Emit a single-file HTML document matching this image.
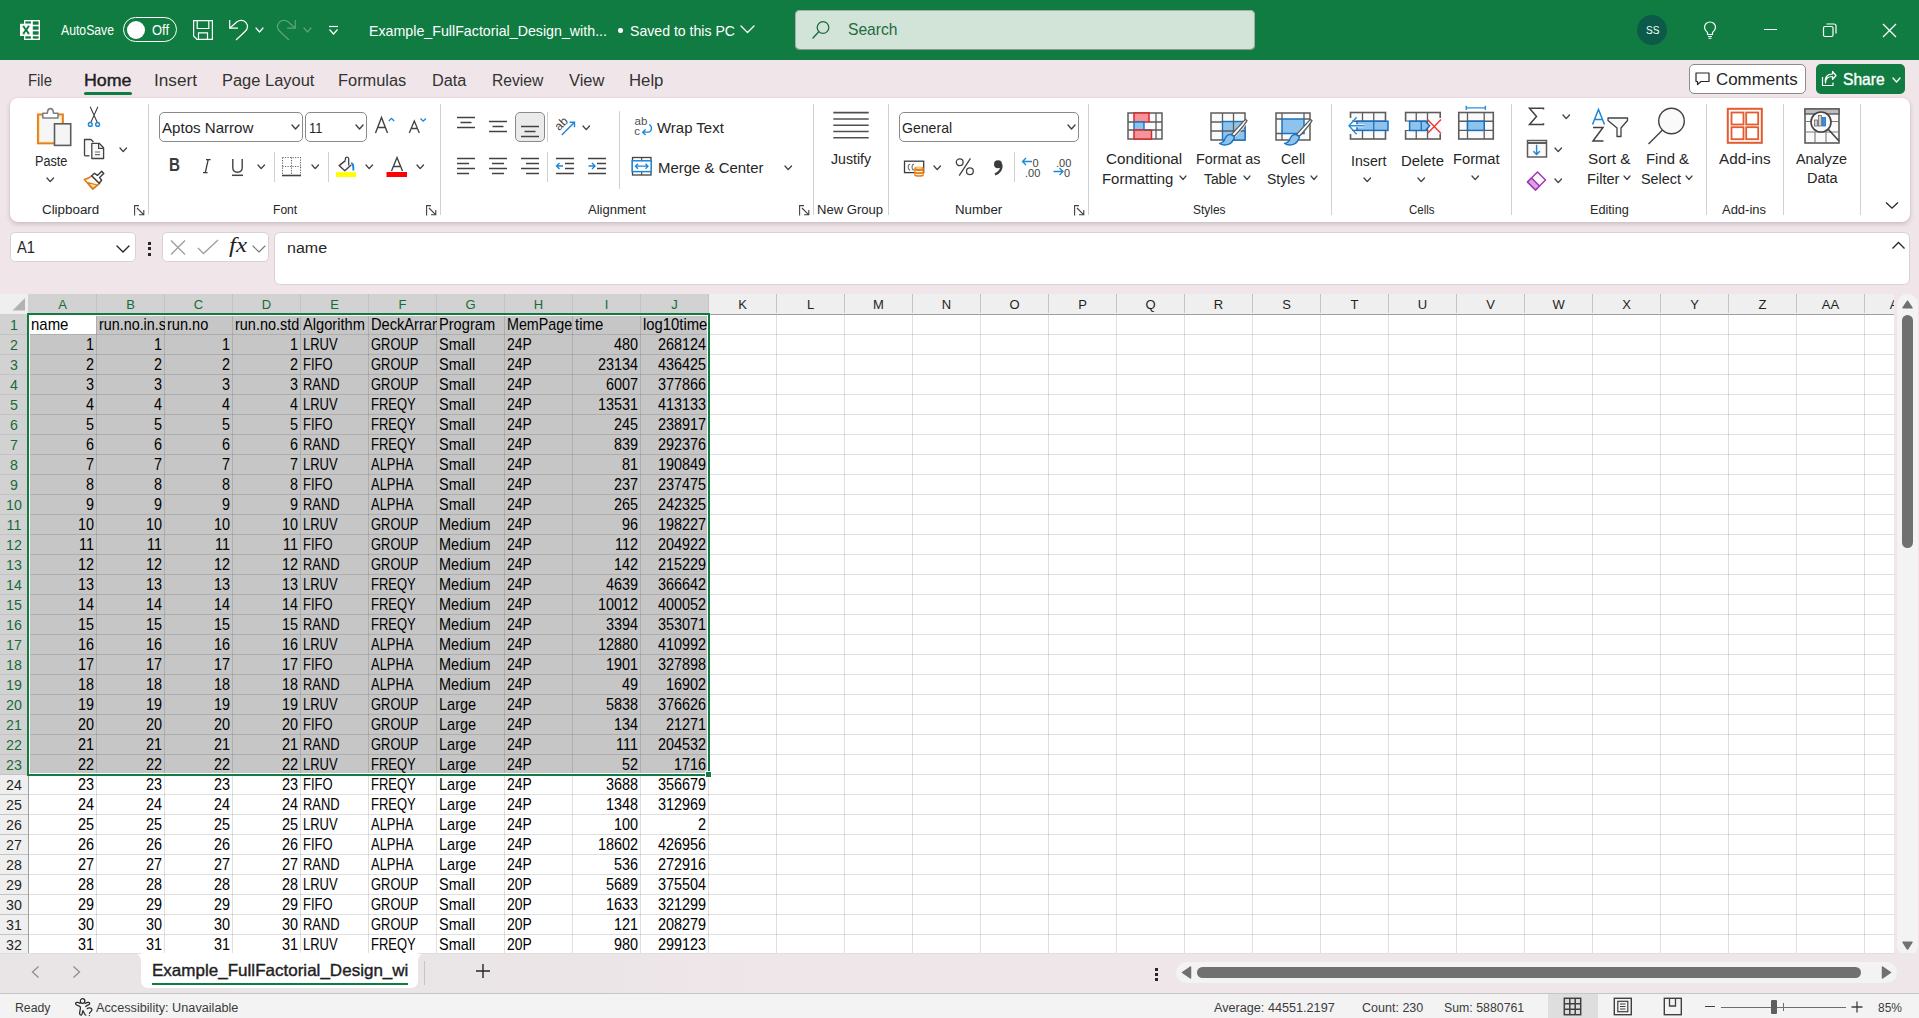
<!DOCTYPE html><html><head><meta charset="utf-8"><title>Excel</title><style>
*{margin:0;padding:0;box-sizing:border-box}
html,body{width:1919px;height:1018px;overflow:hidden}
body{position:relative;background:#f0e6e9;font-family:"Liberation Sans",sans-serif;color:#262626}
.t{position:absolute;white-space:nowrap;transform-origin:0 50%}
.i{position:absolute;overflow:visible}
.r{position:absolute}
</style></head><body><div class="r" style="left:0px;top:0px;width:1919px;height:60px;background:#107c41"></div>
<svg class="i" style="left:20px;top:20px;" width="20" height="20" viewBox="0 0 20 20"><rect x="4" y="0" width="16" height="20" rx="0.6" fill="#fff"/><g fill="#107c41"><rect x="5.3" y="1.4" width="5.6" height="2.3"/><rect x="12.8" y="1.4" width="5.8" height="3.3"/><rect x="12.8" y="6.3" width="5.8" height="3.4"/><rect x="12.8" y="11.3" width="5.8" height="3.4"/><rect x="12.8" y="16.3" width="5.8" height="2.3"/><rect x="5.3" y="16.3" width="5.6" height="2.3"/></g><rect x="0" y="3.7" width="12" height="12.4" rx="0.5" fill="#fff"/><path d="M3.3 6.3 L8.8 13.6 M8.8 6.3 L3.3 13.6" stroke="#107c41" stroke-width="1.9"/><path d="M2.6 6.2 H4.6 M7.6 6.2 H9.6 M2.6 13.8 H4.6 M7.6 13.8 H9.6" stroke="#107c41" stroke-width="0.9"/></svg>
<div class="t" style="left:61.0px;top:23.15px;font-size:14.00px;line-height:14.00px;color:#fff;transform:scaleX(0.8730);">AutoSave</div>
<div class="r" style="left:122.5px;top:17px;width:54px;height:25px;border:1px solid #fff;border-radius:13px"></div>
<div class="r" style="left:127px;top:20.5px;width:18px;height:18px;background:#fff;border-radius:50%"></div>
<div class="t" style="left:151.5px;top:23.15px;font-size:14.00px;line-height:14.00px;color:#fff;transform:scaleX(0.9231);">Off</div>
<svg class="i" style="left:193px;top:20px;" width="20" height="20" viewBox="0 0 20 20"><path d="M0.6 0.6 H19.4 V19.4 H4 L0.6 16 Z" fill="none" stroke="#fff" stroke-width="1.2" stroke-linejoin="miter"/><path d="M4.2 0.6 V8.5 H15.8 V0.6" fill="none" stroke="#fff" stroke-width="1.2"/><path d="M5.5 19.4 V12.8 H14.5 V19.4" fill="none" stroke="#fff" stroke-width="1.2"/></svg>
<svg class="i" style="left:227px;top:19px;" width="22" height="22" viewBox="0 0 22 22"><path d="M2.7 1 V9.2 H11" fill="none" stroke="#fff" stroke-width="1.2"/><path d="M3 9 L10 2.8 C12.5 0.6 16.8 0.8 19 3.6 C21.2 6.4 20.6 10 18 12.5 L9 21" fill="none" stroke="#fff" stroke-width="1.2"/></svg>
<svg class="i" style="left:255.0px;top:26.5px;" width="9" height="6" viewBox="0 0 9 6"><path d="M1 1 L4.5 5.0 L8.0 1" fill="none" stroke="#fff" stroke-width="1.2" stroke-linecap="round" stroke-linejoin="round"/></svg>
<svg class="i" style="left:276px;top:19px;" width="22" height="22" viewBox="0 0 22 22"><path d="M19.3 1 V9.2 H11" fill="none" stroke="#5aa57a" stroke-width="1.2"/><path d="M19 9 L12 2.8 C9.5 0.6 5.2 0.8 3 3.6 C0.8 6.4 1.4 10 4 12.5 L13 21" fill="none" stroke="#5aa57a" stroke-width="1.2"/></svg>
<svg class="i" style="left:303.0px;top:26.5px;" width="9" height="6" viewBox="0 0 9 6"><path d="M1 1 L4.5 5.0 L8.0 1" fill="none" stroke="#5aa57a" stroke-width="1.2" stroke-linecap="round" stroke-linejoin="round"/></svg>
<svg class="i" style="left:328px;top:25px;" width="11" height="11" viewBox="0 0 11 11"><path d="M1 1.5 H10" stroke="#fff" stroke-width="1.2"/><path d="M1.5 4.5 L5.5 9 L9.5 4.5" fill="none" stroke="#fff" stroke-width="1.2"/></svg>
<div class="t" style="left:369.0px;top:23.30px;font-size:15.00px;line-height:15.00px;color:#fff;transform:scaleX(0.9484);">Example_FullFactorial_Design_with...</div>
<div class="r" style="left:618px;top:28px;width:4.5px;height:4.5px;background:#fff;border-radius:50%"></div>
<div class="t" style="left:630.0px;top:23.30px;font-size:15.00px;line-height:15.00px;color:#fff;transform:scaleX(0.9398);">Saved to this PC</div>
<svg class="i" style="left:739.5px;top:24.8px;" width="15" height="8.5" viewBox="0 0 15 8.5"><path d="M1 1 L7.5 7.5 L14.0 1" fill="none" stroke="#fff" stroke-width="1.3" stroke-linecap="round" stroke-linejoin="round"/></svg>
<div class="r" style="left:795px;top:10px;width:460px;height:40px;background:#d2e3d8;border-radius:5px;box-shadow:inset 0 -1px 0 #8c9a91, inset 0 0 0 1px #9fb0a5"></div>
<svg class="i" style="left:811px;top:20px;" width="20" height="20" viewBox="0 0 20 20"><circle cx="12" cy="7.5" r="5.8" fill="none" stroke="#1e6b3e" stroke-width="1.3"/><path d="M7.8 11.8 L2 18" stroke="#1e6b3e" stroke-width="1.4" stroke-linecap="round"/></svg>
<div class="t" style="left:847.5px;top:20.61px;font-size:17.00px;line-height:17.00px;color:#1e6b3e;transform:scaleX(0.9189);">Search</div>
<div class="r" style="left:1637px;top:15px;width:30px;height:30px;background:#0c5a4a;border-radius:50%"></div>
<div class="t" style="left:1645.5px;top:25.11px;font-size:10.50px;line-height:10.50px;color:#fff;transform:scaleX(0.9638);">SS</div>
<svg class="i" style="left:1703px;top:21px;" width="14" height="18" viewBox="0 0 14 18"><path d="M4.5 11.5 C2.5 10 1.5 8.3 1.5 6.3 C1.5 3.2 4 1 7 1 C10 1 12.5 3.2 12.5 6.3 C12.5 8.3 11.5 10 9.5 11.5 V13.5 H4.5 Z" fill="none" stroke="#fff" stroke-width="1.2" stroke-linejoin="round"/><path d="M5 15.5 H9 M5.5 17.3 H8.5" stroke="#fff" stroke-width="1.1"/></svg>
<div class="r" style="left:1763.5px;top:28.5px;width:13px;height:1.3px;background:#fff"></div>
<svg class="i" style="left:1822px;top:22px;" width="16" height="16" viewBox="0 0 16 16"><rect x="1.5" y="4.5" width="9.5" height="10" rx="1.5" fill="none" stroke="#fff" stroke-width="1.2"/><path d="M4.5 2 H12 C13.3 2 14 2.8 14 4 V11.5" fill="none" stroke="#fff" stroke-width="1.2"/></svg>
<svg class="i" style="left:1882px;top:23px;" width="15" height="15" viewBox="0 0 15 15"><path d="M1 1 L14 14 M14 1 L1 14" stroke="#fff" stroke-width="1.3"/></svg>
<div class="t" style="left:27.5px;top:73.46px;font-size:16.00px;line-height:16.00px;color:#323232;transform:scaleX(0.9270);">File</div>
<div class="t" style="left:84.0px;top:73.46px;font-size:16.00px;line-height:16.00px;color:#1f1f1f;transform:scaleX(1.1129);-webkit-text-stroke:0.4px #1f1f1f;">Home</div>
<div class="t" style="left:154.0px;top:73.46px;font-size:16.00px;line-height:16.00px;color:#323232;transform:scaleX(1.0746);">Insert</div>
<div class="t" style="left:221.6px;top:73.46px;font-size:16.00px;line-height:16.00px;color:#323232;transform:scaleX(1.0283);">Page Layout</div>
<div class="t" style="left:338.4px;top:73.46px;font-size:16.00px;line-height:16.00px;color:#323232;transform:scaleX(1.0243);">Formulas</div>
<div class="t" style="left:431.6px;top:73.46px;font-size:16.00px;line-height:16.00px;color:#323232;transform:scaleX(1.0178);">Data</div>
<div class="t" style="left:491.7px;top:73.46px;font-size:16.00px;line-height:16.00px;color:#323232;transform:scaleX(0.9778);">Review</div>
<div class="t" style="left:568.6px;top:73.46px;font-size:16.00px;line-height:16.00px;color:#323232;transform:scaleX(1.0293);">View</div>
<div class="t" style="left:628.6px;top:73.46px;font-size:16.00px;line-height:16.00px;color:#323232;transform:scaleX(1.0454);">Help</div>
<div class="r" style="left:84px;top:92px;width:48px;height:3px;background:#107c41;border-radius:2px"></div>
<div class="r" style="left:1689px;top:64px;width:117px;height:30px;background:#fff;border:1px solid #8f8b8c;border-radius:5px"></div>
<svg class="i" style="left:1695px;top:72px;" width="15" height="13" viewBox="0 0 15 13"><path d="M1 1 H14 V9.5 H6 L2.5 12.5 V9.5 H1 Z" fill="none" stroke="#262626" stroke-width="1.2" stroke-linejoin="round"/></svg>
<div class="t" style="left:1716.0px;top:70.83px;font-size:16.50px;line-height:16.50px;color:#262626;transform:scaleX(1.0242);">Comments</div>
<div class="r" style="left:1816px;top:64px;width:89px;height:30px;background:#107c41;border-radius:5px"></div>
<svg class="i" style="left:1821px;top:70px;" width="16" height="17" viewBox="0 0 16 17"><path d="M1.5 7 V15.5 H12 V12.5" fill="none" stroke="#fff" stroke-width="1.2" stroke-linejoin="round"/><path d="M4.5 13 C4.5 8.5 7 6.5 11.5 6.5 V9.5 L15 5.5 L11.5 1.5 V4 C6.5 4 3.5 7 4.5 13 Z" fill="none" stroke="#fff" stroke-width="1.2" stroke-linejoin="round"/></svg>
<div class="t" style="left:1842.5px;top:70.83px;font-size:16.50px;line-height:16.50px;color:#fff;transform:scaleX(0.9470);-webkit-text-stroke:0.4px #fff;">Share</div>
<svg class="i" style="left:1892.0px;top:76.5px;" width="9" height="6" viewBox="0 0 9 6"><path d="M1 1 L4.5 5.0 L8.0 1" fill="none" stroke="#fff" stroke-width="1.3" stroke-linecap="round" stroke-linejoin="round"/></svg>
<div class="r" style="left:10px;top:98px;width:1900px;height:124px;background:#fff;border-radius:8px;box-shadow:0 2px 5px rgba(60,40,50,0.22), 0 0 1px rgba(0,0,0,0.12)"></div>
<div class="r" style="left:148px;top:104px;width:1px;height:111px;background:#d1d1d1"></div>
<div class="r" style="left:440px;top:104px;width:1px;height:111px;background:#d1d1d1"></div>
<div class="r" style="left:813px;top:104px;width:1px;height:111px;background:#d1d1d1"></div>
<div class="r" style="left:888px;top:104px;width:1px;height:111px;background:#d1d1d1"></div>
<div class="r" style="left:1088px;top:104px;width:1px;height:111px;background:#d1d1d1"></div>
<div class="r" style="left:1331px;top:104px;width:1px;height:111px;background:#d1d1d1"></div>
<div class="r" style="left:1511px;top:104px;width:1px;height:111px;background:#d1d1d1"></div>
<div class="r" style="left:1706px;top:104px;width:1px;height:111px;background:#d1d1d1"></div>
<div class="r" style="left:1783px;top:104px;width:1px;height:111px;background:#d1d1d1"></div>
<div class="r" style="left:1860px;top:104px;width:1px;height:111px;background:#d1d1d1"></div>
<svg class="i" style="left:36px;top:106px;" width="36" height="41" viewBox="0 0 36 41"><rect x="1.9" y="8.4" width="25" height="29" fill="#fbe3a0" stroke="#e67e22" stroke-width="1.9"/><rect x="4" y="10.5" width="20.8" height="25" fill="#f6f6f6"/><path d="M6.8 12 V7.3 H11.3 C11.5 4 13 2.6 14.4 2.6 C15.8 2.6 17.3 4 17.5 7.3 H22 V12 Z" fill="#fff" stroke="#808080" stroke-width="1.6" stroke-linejoin="round"/><rect x="18.5" y="17.8" width="16.2" height="21.6" fill="#f5f5f5" stroke="#5c5c5c" stroke-width="1.6"/></svg>
<div class="t" style="left:35.0px;top:153.55px;font-size:14.00px;line-height:14.00px;color:#262626;transform:scaleX(0.9050);">Paste</div>
<svg class="i" style="left:46.2px;top:177.2px;" width="8.5" height="5.6" viewBox="0 0 8.5 5.6"><path d="M1 1 L4.2 4.6 L7.5 1" fill="none" stroke="#424242" stroke-width="1.35" stroke-linecap="round" stroke-linejoin="round"/></svg>
<svg class="i" style="left:86px;top:106px;" width="16" height="22" viewBox="0 0 16 22"><path d="M4.2 0.8 L11.2 16.3 M11.9 0.8 L4.9 16.3" stroke="#3b3b3b" stroke-width="1.05"/><circle cx="4.3" cy="18.4" r="1.9" fill="#fff" stroke="#1c86d6" stroke-width="1.4"/><circle cx="11.6" cy="18.4" r="1.9" fill="#fff" stroke="#1c86d6" stroke-width="1.4"/></svg>
<svg class="i" style="left:83px;top:138px;" width="22" height="22" viewBox="0 0 22 22"><path d="M1.5 17.8 V1.5 H8 L10.5 4" fill="#f8f8f8" stroke="#424242" stroke-width="1.3" stroke-linejoin="round"/><path d="M1.5 17.8 H6.5" stroke="#424242" stroke-width="1.3"/><path d="M8.8 5.3 H16.2 L20.6 9.7 V20.5 H8.8 Z" fill="#f8f8f8" stroke="#424242" stroke-width="1.3" stroke-linejoin="round"/><path d="M15.6 5.5 V10.3 H20.4" fill="none" stroke="#424242" stroke-width="1.2"/><path d="M12 14 H17 M12 16.6 H17" fill="none" stroke="#6b6b6b" stroke-width="1.1"/></svg>
<svg class="i" style="left:119.2px;top:146.7px;" width="8.5" height="5.6" viewBox="0 0 8.5 5.6"><path d="M1 1 L4.2 4.6 L7.5 1" fill="none" stroke="#424242" stroke-width="1.35" stroke-linecap="round" stroke-linejoin="round"/></svg>
<svg class="i" style="left:83px;top:170px;" width="22" height="21" viewBox="0 0 22 21"><path d="M1.3 9.6 C4.5 8.8 7 7.8 8.8 5.8 L16.7 13.4 L9.8 19.3 Z" fill="#fafafa" stroke="#e07a1c" stroke-width="1.5" stroke-linejoin="round"/><path d="M4.8 12.6 L14.6 15 L9.9 18.6 Z" fill="#fbe08e" stroke="#e07a1c" stroke-width="1.2" stroke-linejoin="round"/><path d="M8.7 5.8 L11.5 3.3 L14.4 5.4 L18.7 1.3 L20.8 3.5 L16.6 7.6 L18.6 10.2 L16.2 13.3 Z" fill="#fff" stroke="#3b3b3b" stroke-width="1.4" stroke-linejoin="round"/></svg>
<div class="t" style="left:42.4px;top:204.22px;font-size:12.50px;line-height:12.50px;color:#262626;transform:scaleX(1.0690);">Clipboard</div>
<svg class="i" style="left:134px;top:205px;" width="11" height="11" viewBox="0 0 11 11"><path d="M0.6 10.4 V0.6 H5" fill="none" stroke="#424242" stroke-width="1.1"/><path d="M3 3 L9.8 9.8 M5 9.8 H9.8 V5" fill="none" stroke="#424242" stroke-width="1.1"/></svg>
<div class="r" style="left:159px;top:112px;width:144px;height:30px;border:1px solid #8a8a8a;border-radius:5px;background:#fff"></div>
<div class="t" style="left:162.4px;top:120.30px;font-size:15.00px;line-height:15.00px;color:#262626;transform:scaleX(1.0059);">Aptos Narrow</div>
<svg class="i" style="left:290.5px;top:124.0px;" width="9" height="6" viewBox="0 0 9 6"><path d="M1 1 L4.5 5.0 L8.0 1" fill="none" stroke="#424242" stroke-width="1.4" stroke-linecap="round" stroke-linejoin="round"/></svg>
<div class="r" style="left:305px;top:112px;width:62px;height:30px;border:1px solid #8a8a8a;border-radius:5px;background:#fff"></div>
<div class="t" style="left:309.0px;top:120.30px;font-size:15.00px;line-height:15.00px;color:#262626;transform:scaleX(0.8605);">11</div>
<svg class="i" style="left:355.1px;top:124.0px;" width="9" height="6" viewBox="0 0 9 6"><path d="M1 1 L4.5 5.0 L8.0 1" fill="none" stroke="#424242" stroke-width="1.4" stroke-linecap="round" stroke-linejoin="round"/></svg>
<svg class="i" style="left:374px;top:116px;" width="22" height="18" viewBox="0 0 22 18"><path d="M1.5 17 L7.5 1.5 L13.5 17 M3.8 11.5 H11.2" fill="none" stroke="#424242" stroke-width="1.4"/><path d="M14.8 5 L17.5 2.3 L20.2 5" fill="none" stroke="#1c86d6" stroke-width="1.3"/></svg>
<svg class="i" style="left:408px;top:116px;" width="20" height="18" viewBox="0 0 20 18"><path d="M1.3 17 L6.3 5 L11.3 17 M3.1 12.5 H9.5" fill="none" stroke="#424242" stroke-width="1.3"/><path d="M12.5 2.5 L15.2 5.2 L17.9 2.5" fill="none" stroke="#1c86d6" stroke-width="1.3"/></svg>
<div class="t" style="left:168.5px;top:157.19px;font-size:17.50px;line-height:17.50px;color:#3b3b3b;font-weight:700;transform:scaleX(0.8704);">B</div>
<svg class="i" style="left:200px;top:158px;" width="13" height="16" viewBox="0 0 13 16"><path d="M5.3 14.6 L8.2 1.6 M3 14.6 H7.6 M6 1.6 H10.6" fill="none" stroke="#3b3b3b" stroke-width="1.3"/></svg>
<svg class="i" style="left:230px;top:158px;" width="15" height="19" viewBox="0 0 15 19"><path d="M2.8 1 V9.5 C2.8 12.8 4.8 14.2 7.5 14.2 C10.2 14.2 12.2 12.8 12.2 9.5 V1" fill="none" stroke="#424242" stroke-width="1.4"/><path d="M2 17.3 H13" stroke="#424242" stroke-width="1.5"/></svg>
<svg class="i" style="left:257.2px;top:164.2px;" width="8.5" height="5.6" viewBox="0 0 8.5 5.6"><path d="M1 1 L4.2 4.6 L7.5 1" fill="none" stroke="#424242" stroke-width="1.35" stroke-linecap="round" stroke-linejoin="round"/></svg>
<div class="r" style="left:274px;top:152px;width:1px;height:30px;background:#d1d1d1"></div>
<svg class="i" style="left:281px;top:156px;" width="21" height="21" viewBox="0 0 21 21"><path d="M1.5 1.5 H19.5 V19.5 M1.5 1.5 V19.5 M10.5 1.5 V19.5 M1.5 10.5 H19.5" fill="none" stroke="#6b6b6b" stroke-width="1.1" stroke-dasharray="1.2 1.3"/><path d="M1 19.5 H20" stroke="#424242" stroke-width="1.6"/></svg>
<svg class="i" style="left:311.2px;top:164.2px;" width="8.5" height="5.6" viewBox="0 0 8.5 5.6"><path d="M1 1 L4.2 4.6 L7.5 1" fill="none" stroke="#424242" stroke-width="1.35" stroke-linecap="round" stroke-linejoin="round"/></svg>
<div class="r" style="left:328px;top:152px;width:1px;height:30px;background:#d1d1d1"></div>
<svg class="i" style="left:336px;top:155px;" width="21" height="23" viewBox="0 0 21 23"><path d="M9.4 5.6 L3.1 10.6 L8.8 15.7 L15.2 9.9 Z" fill="#fafafa" stroke="none"/><path d="M9.4 5.6 L3.1 10.6 L8.8 15.7 L15.2 9.9" fill="none" stroke="#424242" stroke-width="1.4" stroke-linejoin="round"/><path d="M9.4 5.6 V3.9 C9.4 1.4 12.7 1.4 12.7 3.9 V10.4" fill="none" stroke="#424242" stroke-width="1.3"/><path d="M15 8.1 C16.9 8.1 17.4 9.6 17.4 15.6" fill="none" stroke="#1c86d6" stroke-width="1.9"/><rect x="0" y="17.2" width="20" height="4.8" fill="#ffff00"/></svg>
<svg class="i" style="left:365.2px;top:164.2px;" width="8.5" height="5.6" viewBox="0 0 8.5 5.6"><path d="M1 1 L4.2 4.6 L7.5 1" fill="none" stroke="#424242" stroke-width="1.35" stroke-linecap="round" stroke-linejoin="round"/></svg>
<svg class="i" style="left:386px;top:156px;" width="22" height="22" viewBox="0 0 22 22"><path d="M5.5 15 L11 1.5 L16.5 15 M7.5 10.5 H14.5" fill="none" stroke="#424242" stroke-width="1.4"/><rect x="0.5" y="16" width="20.5" height="5" fill="#ff0000"/></svg>
<svg class="i" style="left:416.2px;top:164.2px;" width="8.5" height="5.6" viewBox="0 0 8.5 5.6"><path d="M1 1 L4.2 4.6 L7.5 1" fill="none" stroke="#424242" stroke-width="1.35" stroke-linecap="round" stroke-linejoin="round"/></svg>
<div class="t" style="left:272.6px;top:204.22px;font-size:12.50px;line-height:12.50px;color:#262626;transform:scaleX(0.9675);">Font</div>
<svg class="i" style="left:426px;top:205px;" width="11" height="11" viewBox="0 0 11 11"><path d="M0.6 10.4 V0.6 H5" fill="none" stroke="#424242" stroke-width="1.1"/><path d="M3 3 L9.8 9.8 M5 9.8 H9.8 V5" fill="none" stroke="#424242" stroke-width="1.1"/></svg>
<svg class="i" style="left:455px;top:114px;" width="22" height="18" viewBox="0 0 22 18"><path d="M2.0 3.5 H20.0" stroke="#424242" stroke-width="1.5"/><path d="M5.5 8.5 H16.5" stroke="#424242" stroke-width="1.5"/><path d="M2.0 13.5 H20.0" stroke="#424242" stroke-width="1.5"/></svg>
<svg class="i" style="left:487px;top:118px;" width="22" height="18" viewBox="0 0 22 18"><path d="M2.0 3.5 H20.0" stroke="#424242" stroke-width="1.5"/><path d="M5.5 8.5 H16.5" stroke="#424242" stroke-width="1.5"/><path d="M2.0 13.5 H20.0" stroke="#424242" stroke-width="1.5"/></svg>
<div class="r" style="left:515px;top:112px;width:30px;height:30px;background:#ebebeb;border:1px solid #8a8a8a;border-radius:5px"></div>
<svg class="i" style="left:519px;top:123px;" width="22" height="18" viewBox="0 0 22 18"><path d="M2.0 3.5 H20.0" stroke="#424242" stroke-width="1.5"/><path d="M5.5 8.5 H16.5" stroke="#424242" stroke-width="1.5"/><path d="M2.0 13.5 H20.0" stroke="#424242" stroke-width="1.5"/></svg>
<div class="r" style="left:547px;top:112px;width:1px;height:30px;background:#d1d1d1"></div>
<svg class="i" style="left:552px;top:114px;" width="26" height="24" viewBox="0 0 26 24"><text x="0" y="0" transform="translate(7.3 17.3) rotate(-45)" font-family="Liberation Sans" font-size="12" fill="#3b3b3b">ab</text><path d="M9.8 21 L22.5 8.3 M17.6 8.3 H22.5 V13.2" fill="none" stroke="#1c86d6" stroke-width="1.4"/></svg>
<svg class="i" style="left:582.2px;top:124.7px;" width="8.5" height="5.6" viewBox="0 0 8.5 5.6"><path d="M1 1 L4.2 4.6 L7.5 1" fill="none" stroke="#424242" stroke-width="1.35" stroke-linecap="round" stroke-linejoin="round"/></svg>
<svg class="i" style="left:455px;top:155px;" width="22" height="22" viewBox="0 0 22 22"><path d="M2.0 3.5 H20.0" stroke="#424242" stroke-width="1.5"/><path d="M2.0 8.5 H14.0" stroke="#424242" stroke-width="1.5"/><path d="M2.0 13.5 H20.0" stroke="#424242" stroke-width="1.5"/><path d="M2.0 18.5 H14.0" stroke="#424242" stroke-width="1.5"/></svg>
<svg class="i" style="left:487px;top:155px;" width="22" height="22" viewBox="0 0 22 22"><path d="M2.0 3.5 H20.0" stroke="#424242" stroke-width="1.5"/><path d="M5.0 8.5 H17.0" stroke="#424242" stroke-width="1.5"/><path d="M2.0 13.5 H20.0" stroke="#424242" stroke-width="1.5"/><path d="M5.0 18.5 H17.0" stroke="#424242" stroke-width="1.5"/></svg>
<svg class="i" style="left:519px;top:155px;" width="22" height="22" viewBox="0 0 22 22"><path d="M2.0 3.5 H20.0" stroke="#424242" stroke-width="1.5"/><path d="M7.0 8.5 H20.0" stroke="#424242" stroke-width="1.5"/><path d="M2.0 13.5 H20.0" stroke="#424242" stroke-width="1.5"/><path d="M7.0 18.5 H20.0" stroke="#424242" stroke-width="1.5"/></svg>
<div class="r" style="left:547px;top:152px;width:1px;height:30px;background:#d1d1d1"></div>
<svg class="i" style="left:554px;top:155px;" width="22" height="22" viewBox="0 0 22 22"><path d="M2.0 3.5 H20.0" stroke="#424242" stroke-width="1.5"/><path d="M11.0 8.5 H20.0" stroke="#424242" stroke-width="1.5"/><path d="M11.0 13.5 H20.0" stroke="#424242" stroke-width="1.5"/><path d="M2.0 18.5 H20.0" stroke="#424242" stroke-width="1.5"/><path d="M2.5 11 H9 M5.5 8 L2.5 11 L5.5 14" fill="none" stroke="#1c86d6" stroke-width="1.4"/></svg>
<svg class="i" style="left:586px;top:155px;" width="22" height="22" viewBox="0 0 22 22"><path d="M2.0 3.5 H20.0" stroke="#424242" stroke-width="1.5"/><path d="M11.0 8.5 H20.0" stroke="#424242" stroke-width="1.5"/><path d="M11.0 13.5 H20.0" stroke="#424242" stroke-width="1.5"/><path d="M2.0 18.5 H20.0" stroke="#424242" stroke-width="1.5"/><path d="M2.5 11 H9 M6 8 L9 11 L6 14" fill="none" stroke="#1c86d6" stroke-width="1.4"/></svg>
<div class="r" style="left:619px;top:111px;width:1px;height:78px;background:#d1d1d1"></div>
<svg class="i" style="left:633px;top:115px;" width="21" height="23" viewBox="0 0 21 23"><text x="1.6" y="10.2" font-family="Liberation Sans" font-size="11.5" fill="#505050">ab</text><text x="1.2" y="19.6" font-family="Liberation Sans" font-size="11.5" fill="#505050">c</text><path d="M16.2 9.5 C19.2 11 19.6 16.8 15 17.2 H9.8 M12.6 14.4 L9.6 17.2 L12.6 20" fill="none" stroke="#1c86d6" stroke-width="1.3"/></svg>
<div class="t" style="left:657.0px;top:120.30px;font-size:15.00px;line-height:15.00px;color:#262626;transform:scaleX(0.9974);">Wrap Text</div>
<svg class="i" style="left:631px;top:156px;" width="22" height="21" viewBox="0 0 22 21"><rect x="1.5" y="1.5" width="18.5" height="17.5" fill="#fff" stroke="#424242" stroke-width="1.3"/><path d="M10.7 1.5 V5 M10.7 15.5 V19" stroke="#424242" stroke-width="1.1"/><rect x="1.2" y="4.8" width="19" height="10.8" fill="#fff" stroke="#1c86d6" stroke-width="1.5"/><path d="M4.5 10.2 H17 M7 7.7 L4.5 10.2 L7 12.7 M14.5 7.7 L17 10.2 L14.5 12.7" fill="none" stroke="#1c86d6" stroke-width="1.3"/></svg>
<div class="t" style="left:657.5px;top:160.30px;font-size:15.00px;line-height:15.00px;color:#262626;transform:scaleX(0.9964);">Merge &amp; Center</div>
<svg class="i" style="left:784.2px;top:164.7px;" width="8.5" height="5.6" viewBox="0 0 8.5 5.6"><path d="M1 1 L4.2 4.6 L7.5 1" fill="none" stroke="#424242" stroke-width="1.35" stroke-linecap="round" stroke-linejoin="round"/></svg>
<div class="t" style="left:588.0px;top:204.22px;font-size:12.50px;line-height:12.50px;color:#262626;transform:scaleX(1.0398);">Alignment</div>
<svg class="i" style="left:799px;top:205px;" width="11" height="11" viewBox="0 0 11 11"><path d="M0.6 10.4 V0.6 H5" fill="none" stroke="#424242" stroke-width="1.1"/><path d="M3 3 L9.8 9.8 M5 9.8 H9.8 V5" fill="none" stroke="#424242" stroke-width="1.1"/></svg>
<svg class="i" style="left:832px;top:110px;" width="38" height="30" viewBox="0 0 38 30"><path d="M1.3 2.6 H36.7" stroke="#505050" stroke-width="1.6"/><path d="M1.3 9.0 H36.7" stroke="#505050" stroke-width="1.6"/><path d="M1.3 15.2 H36.7" stroke="#505050" stroke-width="1.6"/><path d="M1.3 21.5 H36.7" stroke="#505050" stroke-width="1.6"/><path d="M1.3 27.8 H36.7" stroke="#505050" stroke-width="1.6"/></svg>
<div class="t" style="left:831.0px;top:152.15px;font-size:14.00px;line-height:14.00px;color:#262626;transform:scaleX(1.0082);">Justify</div>
<div class="t" style="left:817.4px;top:204.22px;font-size:12.50px;line-height:12.50px;color:#262626;transform:scaleX(1.0439);">New Group</div>
<div class="r" style="left:899px;top:112px;width:180px;height:30px;border:1px solid #8a8a8a;border-radius:5px;background:#fff"></div>
<div class="t" style="left:902.3px;top:120.30px;font-size:15.00px;line-height:15.00px;color:#262626;transform:scaleX(0.9388);">General</div>
<svg class="i" style="left:1066.5px;top:124.0px;" width="9" height="6" viewBox="0 0 9 6"><path d="M1 1 L4.5 5.0 L8.0 1" fill="none" stroke="#424242" stroke-width="1.4" stroke-linecap="round" stroke-linejoin="round"/></svg>
<svg class="i" style="left:903px;top:159px;" width="24" height="20" viewBox="0 0 24 20"><rect x="1.5" y="2.2" width="19.2" height="11.4" fill="#fff" stroke="#3b3b3b" stroke-width="1.3"/><path d="M7.2 5.2 C4.6 5.2 4.6 11 7.2 11 M11 5.2 C8.4 5.2 8.4 11 11 11" fill="none" stroke="#6b6b6b" stroke-width="1.1"/><path d="M11.2 9 C11.2 7.2 20.8 7.2 20.8 9 V16.2 C20.8 18.2 11.2 18.2 11.2 16.2 Z" fill="#e8801e"/><ellipse cx="16" cy="9" rx="3.4" ry="0.9" fill="#fbd26a"/><path d="M12.4 12 C13 13 19 13 19.6 12 M12.4 15 C13 16 19 16 19.6 15" fill="none" stroke="#fff" stroke-width="1.1"/></svg>
<svg class="i" style="left:933.2px;top:164.7px;" width="8.5" height="5.6" viewBox="0 0 8.5 5.6"><path d="M1 1 L4.2 4.6 L7.5 1" fill="none" stroke="#424242" stroke-width="1.35" stroke-linecap="round" stroke-linejoin="round"/></svg>
<svg class="i" style="left:955px;top:157px;" width="21" height="21" viewBox="0 0 21 21"><circle cx="4.7" cy="5.3" r="3.4" fill="none" stroke="#424242" stroke-width="1.3"/><circle cx="14.9" cy="14.3" r="3.4" fill="none" stroke="#424242" stroke-width="1.3"/><path d="M15.5 1.3 L4.2 18.6" stroke="#424242" stroke-width="1.3"/></svg>
<svg class="i" style="left:992px;top:159px;" width="12" height="18" viewBox="0 0 12 18"><circle cx="6" cy="5.3" r="4" fill="#3b3b3b"/><path d="M9.5 5.5 C10 10 7.5 13.5 3 15.5" fill="none" stroke="#3b3b3b" stroke-width="2.2"/></svg>
<div class="r" style="left:1014px;top:152px;width:1px;height:30px;background:#d1d1d1"></div>
<svg class="i" style="left:1021px;top:156px;" width="22" height="22" viewBox="0 0 22 22"><path d="M1.5 5.5 H11 M5 2 L1.5 5.5 L5 9" fill="none" stroke="#1c86d6" stroke-width="1.3"/><text x="11.5" y="10.5" font-family="Liberation Sans" font-size="11" fill="#424242">0</text><text x="4" y="20.5" font-family="Liberation Sans" font-size="11" fill="#424242">.00</text></svg>
<svg class="i" style="left:1052px;top:156px;" width="22" height="22" viewBox="0 0 22 22"><text x="4" y="10.5" font-family="Liberation Sans" font-size="11" fill="#424242">.00</text><text x="12" y="20.5" font-family="Liberation Sans" font-size="11" fill="#424242">0</text><path d="M1.5 15.5 H11 M7.5 12 L11 15.5 L7.5 19" fill="none" stroke="#1c86d6" stroke-width="1.3"/></svg>
<div class="t" style="left:954.7px;top:204.22px;font-size:12.50px;line-height:12.50px;color:#262626;transform:scaleX(1.0616);">Number</div>
<svg class="i" style="left:1074px;top:205px;" width="11" height="11" viewBox="0 0 11 11"><path d="M0.6 10.4 V0.6 H5" fill="none" stroke="#424242" stroke-width="1.1"/><path d="M3 3 L9.8 9.8 M5 9.8 H9.8 V5" fill="none" stroke="#424242" stroke-width="1.1"/></svg>
<svg class="i" style="left:1127px;top:112px;" width="36" height="28" viewBox="0 0 36 28"><rect x="1" y="1" width="34" height="26" fill="#fafafa" stroke="#5c5c5c" stroke-width="1.5"/><rect x="7" y="1" width="15" height="9" fill="#f3939b" stroke="#d42a2a" stroke-width="1.5"/><rect x="7" y="10" width="10" height="8" fill="#8ec4ec" stroke="#1a73c4" stroke-width="1.4"/><rect x="7" y="18" width="17.5" height="9" fill="#f3939b" stroke="#d42a2a" stroke-width="1.5"/><path d="M1 10 H7 M22 10 H35 M1 18 H7 M17 18 H35 M29 1 V27" stroke="#5c5c5c" stroke-width="1.3"/></svg>
<div class="t" style="left:1106.3px;top:152.15px;font-size:14.00px;line-height:14.00px;color:#262626;transform:scaleX(1.0878);">Conditional</div>
<div class="t" style="left:1101.7px;top:171.65px;font-size:14.00px;line-height:14.00px;color:#262626;transform:scaleX(1.0656);">Formatting</div>
<svg class="i" style="left:1178.5px;top:175.2px;" width="8" height="5.5" viewBox="0 0 8 5.5"><path d="M1 1 L4.0 4.5 L7.0 1" fill="none" stroke="#424242" stroke-width="1.2" stroke-linecap="round" stroke-linejoin="round"/></svg>
<svg class="i" style="left:1210px;top:112px;" width="40" height="36" viewBox="0 0 40 36"><rect x="1" y="1" width="34" height="27" fill="#fafafa" stroke="#5c5c5c" stroke-width="1.5"/><rect x="12.5" y="9.5" width="22.5" height="18.5" fill="#8ec4ec" stroke="#1a73c4" stroke-width="1.4"/><path d="M1 10 H12.5 M1 19 H12.5 M12.5 1 V10 M23.5 1 V10 M12.5 19 H35 M23.5 10 V28" stroke="#5c5c5c" stroke-width="1.3"/><path d="M36.5 9 C34 12 27 21 22.5 24.5" fill="none" stroke="#fff" stroke-width="4"/><path d="M37 8.5 C36 11 29 19.5 24.5 24 L21.5 22.5 C26 18 33 9.5 35.5 7.5 Z" fill="#fff" stroke="#5c5c5c" stroke-width="1.3" stroke-linejoin="round"/><path d="M21 22.5 C17.5 22 15.5 25 14.5 28 C13.5 30.5 10 31.5 9.5 31.5 C13.5 34 22 34 24.5 25 Z" fill="#8ec4ec" stroke="#1a73c4" stroke-width="1.4" stroke-linejoin="round"/></svg>
<div class="t" style="left:1195.5px;top:152.15px;font-size:14.00px;line-height:14.00px;color:#262626;transform:scaleX(1.0236);">Format as</div>
<div class="t" style="left:1204.0px;top:171.65px;font-size:14.00px;line-height:14.00px;color:#262626;transform:scaleX(0.9860);">Table</div>
<svg class="i" style="left:1242.5px;top:175.2px;" width="8" height="5.5" viewBox="0 0 8 5.5"><path d="M1 1 L4.0 4.5 L7.0 1" fill="none" stroke="#424242" stroke-width="1.2" stroke-linecap="round" stroke-linejoin="round"/></svg>
<svg class="i" style="left:1275px;top:112px;" width="40" height="36" viewBox="0 0 40 36"><rect x="1" y="1" width="34" height="27" fill="#fafafa" stroke="#5c5c5c" stroke-width="1.5"/><rect x="7" y="7" width="22" height="14.5" fill="#8ec4ec" stroke="#1a73c4" stroke-width="1.5"/><path d="M1 7 H7 M29 7 H35 M1 21.5 H7 M7 1 V7 M29 1 V7 M7 21.5 V28" stroke="#5c5c5c" stroke-width="1.3"/><path d="M37 8.5 C36 11 29 19.5 24.5 24 L21.5 22.5 C26 18 33 9.5 35.5 7.5 Z" fill="#fff" stroke="#5c5c5c" stroke-width="1.3" stroke-linejoin="round"/><path d="M21 22.5 C17.5 22 15.5 25 14.5 28 C13.5 30.5 10 31.5 9.5 31.5 C13.5 34 22 34 24.5 25 Z" fill="#8ec4ec" stroke="#1a73c4" stroke-width="1.4" stroke-linejoin="round"/></svg>
<div class="t" style="left:1280.9px;top:152.15px;font-size:14.00px;line-height:14.00px;color:#262626;transform:scaleX(0.9992);">Cell</div>
<div class="t" style="left:1267.0px;top:171.65px;font-size:14.00px;line-height:14.00px;color:#262626;transform:scaleX(0.9967);">Styles</div>
<svg class="i" style="left:1310.0px;top:175.2px;" width="8" height="5.5" viewBox="0 0 8 5.5"><path d="M1 1 L4.0 4.5 L7.0 1" fill="none" stroke="#424242" stroke-width="1.2" stroke-linecap="round" stroke-linejoin="round"/></svg>
<div class="t" style="left:1193.0px;top:204.22px;font-size:12.50px;line-height:12.50px;color:#262626;transform:scaleX(0.9548);">Styles</div>
<svg class="i" style="left:1348px;top:111px;" width="42" height="30" viewBox="0 0 42 30"><rect x="2.5" y="1.5" width="35" height="26.5" fill="#fafafa" stroke="#5c5c5c" stroke-width="1.6"/><path d="M14.5 1.5 V28 M25.75 1.5 V28 M2.5 10.25 H37.5 M2.5 19.4 H37.5" stroke="#5c5c5c" stroke-width="1.3"/><rect x="0" y="7" width="4" height="16" fill="#fff"/><rect x="9" y="10.25" width="31" height="9.15" fill="#8ec4ec" stroke="#1a6fc0" stroke-width="1.5"/><path d="M25.75 10.25 V19.4" stroke="#1a6fc0" stroke-width="1.3"/><path d="M16 14.8 H3" stroke="#fff" stroke-width="3"/><path d="M16 14.8 H1.5 M8.6 6.3 L1 14.8 L8.6 23.3" fill="none" stroke="#2a8fe0" stroke-width="1.4"/></svg>
<div class="t" style="left:1350.6px;top:154.15px;font-size:14.00px;line-height:14.00px;color:#262626;transform:scaleX(1.0110);">Insert</div>
<svg class="i" style="left:1363.2px;top:176.7px;" width="8.5" height="5.6" viewBox="0 0 8.5 5.6"><path d="M1 1 L4.2 4.6 L7.5 1" fill="none" stroke="#424242" stroke-width="1.35" stroke-linecap="round" stroke-linejoin="round"/></svg>
<svg class="i" style="left:1404px;top:111px;" width="40" height="30" viewBox="0 0 40 30"><rect x="1.6" y="1.5" width="34.6" height="26.5" fill="#fafafa" stroke="#5c5c5c" stroke-width="1.6"/><path d="M12.25 1.5 V28 M23.5 1.5 V28 M1.6 10.25 H36.2 M1.6 19.4 H36.2" stroke="#5c5c5c" stroke-width="1.3"/><rect x="0" y="10.6" width="5" height="8.4" fill="#fff"/><rect x="24.5" y="7" width="13" height="16" fill="#fafafa"/><path d="M5.6 10.25 H21.5 L25.6 14.8 L21.5 19.4 H5.6 Z" fill="#8ec4ec" stroke="#1a6fc0" stroke-width="1.5" stroke-linejoin="miter"/><path d="M17.25 10.25 V19.4" stroke="#1a6fc0" stroke-width="1.3"/><path d="M23.5 8.5 L37 22.5 M37 8.5 L23.5 22.5" stroke="#e83a3a" stroke-width="1.4"/></svg>
<div class="t" style="left:1400.8px;top:154.15px;font-size:14.00px;line-height:14.00px;color:#262626;transform:scaleX(1.0625);">Delete</div>
<svg class="i" style="left:1417.2px;top:176.7px;" width="8.5" height="5.6" viewBox="0 0 8.5 5.6"><path d="M1 1 L4.2 4.6 L7.5 1" fill="none" stroke="#424242" stroke-width="1.35" stroke-linecap="round" stroke-linejoin="round"/></svg>
<svg class="i" style="left:1458px;top:105px;" width="38" height="36" viewBox="0 0 38 36"><path d="M8.25 2.9 H27.4 M8.25 0.8 V5 M27.4 0.8 V5" stroke="#2a8fe0" stroke-width="1.4"/><rect x="0.75" y="7.5" width="34.55" height="26.5" fill="#fafafa" stroke="#5c5c5c" stroke-width="1.6"/><path d="M9.5 7.5 V34 M26.2 7.5 V34 M0.75 16.25 H35.3 M0.75 25.4 H35.3" stroke="#5c5c5c" stroke-width="1.3"/><rect x="9.5" y="16.25" width="16.7" height="9.15" fill="#8ec4ec" stroke="#1a6fc0" stroke-width="1.5"/></svg>
<div class="t" style="left:1452.6px;top:151.85px;font-size:14.00px;line-height:14.00px;color:#262626;transform:scaleX(1.0510);">Format</div>
<svg class="i" style="left:1471.2px;top:174.7px;" width="8.5" height="5.6" viewBox="0 0 8.5 5.6"><path d="M1 1 L4.2 4.6 L7.5 1" fill="none" stroke="#424242" stroke-width="1.35" stroke-linecap="round" stroke-linejoin="round"/></svg>
<div class="t" style="left:1408.8px;top:204.22px;font-size:12.50px;line-height:12.50px;color:#262626;transform:scaleX(0.9214);">Cells</div>
<svg class="i" style="left:1528px;top:107px;" width="18" height="20" viewBox="0 0 18 20"><path d="M15.5 2.5 V1.3 H1.5 L8.5 9.5 L1.5 17.5 H15.5 V16.3" fill="none" stroke="#424242" stroke-width="1.5" stroke-linejoin="miter"/></svg>
<svg class="i" style="left:1562.2px;top:114.2px;" width="8.5" height="5.6" viewBox="0 0 8.5 5.6"><path d="M1 1 L4.2 4.6 L7.5 1" fill="none" stroke="#424242" stroke-width="1.35" stroke-linecap="round" stroke-linejoin="round"/></svg>
<svg class="i" style="left:1526px;top:139px;" width="22" height="20" viewBox="0 0 22 20"><rect x="1.5" y="1.5" width="19" height="16.5" fill="#fafafa" stroke="#5c5c5c" stroke-width="1.5"/><path d="M1.5 4 H20.5" stroke="#5c5c5c" stroke-width="2"/><path d="M10.6 5.8 V15.3 M7.4 12.2 L10.6 15.4 L13.8 12.2" fill="none" stroke="#1c86d6" stroke-width="1.4"/></svg>
<svg class="i" style="left:1554.2px;top:146.7px;" width="8.5" height="5.6" viewBox="0 0 8.5 5.6"><path d="M1 1 L4.2 4.6 L7.5 1" fill="none" stroke="#424242" stroke-width="1.35" stroke-linecap="round" stroke-linejoin="round"/></svg>
<svg class="i" style="left:1526px;top:170px;" width="22" height="22" viewBox="0 0 22 22"><path d="M1.5 12 L11.5 2 L19.5 10 L9.5 20 Z" fill="#fafafa" stroke="#a235b5" stroke-width="1.5" stroke-linejoin="round"/><path d="M1.5 12 L5.5 8 L13.5 16 L9.5 20 Z" fill="#d9a2e0" stroke="#a235b5" stroke-width="1.5" stroke-linejoin="round"/></svg>
<svg class="i" style="left:1554.2px;top:178.2px;" width="8.5" height="5.6" viewBox="0 0 8.5 5.6"><path d="M1 1 L4.2 4.6 L7.5 1" fill="none" stroke="#424242" stroke-width="1.35" stroke-linecap="round" stroke-linejoin="round"/></svg>
<svg class="i" style="left:1590px;top:108px;" width="40" height="36" viewBox="0 0 40 36"><path d="M2.5 16.5 L8.5 1.5 L14.5 16.5 M4.5 11.5 H12.5" fill="none" stroke="#1c86d6" stroke-width="1.5"/><path d="M3 19.5 H13 L3 33 H13.5" fill="none" stroke="#424242" stroke-width="1.5"/><path d="M18 10 H37.5 V12.5 L31 20 V28.5 H27 V20 L18 12.5 Z" fill="#fafafa" stroke="#424242" stroke-width="1.3" stroke-linejoin="round"/></svg>
<div class="t" style="left:1588.4px;top:151.75px;font-size:14.00px;line-height:14.00px;color:#262626;transform:scaleX(1.0898);">Sort &amp;</div>
<div class="t" style="left:1586.6px;top:171.85px;font-size:14.00px;line-height:14.00px;color:#262626;transform:scaleX(1.0414);">Filter</div>
<svg class="i" style="left:1623.0px;top:175.2px;" width="8" height="5.5" viewBox="0 0 8 5.5"><path d="M1 1 L4.0 4.5 L7.0 1" fill="none" stroke="#424242" stroke-width="1.2" stroke-linecap="round" stroke-linejoin="round"/></svg>
<svg class="i" style="left:1647px;top:107px;" width="40" height="39" viewBox="0 0 40 39"><circle cx="24.5" cy="14" r="12.8" fill="#fafafa" stroke="#424242" stroke-width="1.4"/><path d="M15.5 23 L1.5 37" stroke="#424242" stroke-width="1.5"/></svg>
<div class="t" style="left:1645.5px;top:151.75px;font-size:14.00px;line-height:14.00px;color:#262626;transform:scaleX(1.0627);">Find &amp;</div>
<div class="t" style="left:1640.6px;top:171.85px;font-size:14.00px;line-height:14.00px;color:#262626;transform:scaleX(1.0254);">Select</div>
<svg class="i" style="left:1684.5px;top:175.2px;" width="8" height="5.5" viewBox="0 0 8 5.5"><path d="M1 1 L4.0 4.5 L7.0 1" fill="none" stroke="#424242" stroke-width="1.2" stroke-linecap="round" stroke-linejoin="round"/></svg>
<div class="t" style="left:1589.6px;top:204.22px;font-size:12.50px;line-height:12.50px;color:#262626;transform:scaleX(1.0151);">Editing</div>
<svg class="i" style="left:1726px;top:107px;" width="38" height="38" viewBox="0 0 38 38"><rect x="1.8" y="1.8" width="34" height="34" fill="#fff" stroke="#e55b2d" stroke-width="2"/><rect x="5.5" y="5.5" width="12" height="12" fill="#fff" stroke="#e55b2d" stroke-width="1.8"/><rect x="20.2" y="5.5" width="12" height="12" fill="#fff" stroke="#e55b2d" stroke-width="1.8"/><rect x="5.5" y="20.2" width="12" height="12" fill="#fff" stroke="#e55b2d" stroke-width="1.8"/><rect x="20.2" y="20.2" width="12" height="12" fill="#fff" stroke="#e55b2d" stroke-width="1.8"/></svg>
<div class="t" style="left:1719.2px;top:152.15px;font-size:14.00px;line-height:14.00px;color:#262626;transform:scaleX(1.0891);">Add-ins</div>
<div class="t" style="left:1722.4px;top:204.42px;font-size:12.50px;line-height:12.50px;color:#262626;transform:scaleX(1.0381);">Add-ins</div>
<svg class="i" style="left:1803px;top:107px;" width="40" height="39" viewBox="0 0 40 39"><rect x="2" y="2" width="34" height="34" fill="#fafafa" stroke="#5c5c5c" stroke-width="1.6"/><rect x="2" y="2" width="34" height="5" fill="#bdbdbd" stroke="#5c5c5c" stroke-width="1.4"/><path d="M2 14.5 H36 M2 25 H36 M12 25 V36 M23 25 V36" stroke="#7a7a7a" stroke-width="1.1"/><circle cx="18" cy="15" r="10" fill="#fafafa" stroke="#424242" stroke-width="1.6"/><path d="M25 22 L36 34" stroke="#424242" stroke-width="1.6"/><rect x="11.5" y="13" width="3" height="6" fill="#cfcfcf" stroke="#6b6b6b" stroke-width="0.8"/><rect x="15.5" y="8.5" width="3" height="10.5" fill="#cfcfcf" stroke="#6b6b6b" stroke-width="0.8"/><rect x="19.5" y="10.5" width="3" height="8.5" fill="#3b8fdc" stroke="#1a73c4" stroke-width="0.8"/></svg>
<div class="t" style="left:1796.4px;top:152.15px;font-size:14.00px;line-height:14.00px;color:#262626;transform:scaleX(1.0259);">Analyze</div>
<div class="t" style="left:1806.6px;top:171.25px;font-size:14.00px;line-height:14.00px;color:#262626;transform:scaleX(1.0381);">Data</div>
<svg class="i" style="left:1885px;top:201px;" width="14" height="9" viewBox="0 0 14 9"><path d="M1 1.5 L7 7.2 L13 1.5" fill="none" stroke="#262626" stroke-width="1.3"/></svg>
<div class="r" style="left:10px;top:232px;width:126px;height:30px;background:#fff;border:1px solid #d8d2d4;border-radius:5px"></div>
<div class="t" style="left:17.0px;top:240.18px;font-size:16.80px;line-height:16.80px;color:#262626;transform:scaleX(0.8759);">A1</div>
<svg class="i" style="left:116.0px;top:245.0px;" width="14" height="8" viewBox="0 0 14 8"><path d="M1 1 L7.0 7.0 L13.0 1" fill="none" stroke="#262626" stroke-width="1.4" stroke-linecap="round" stroke-linejoin="round"/></svg>
<div class="r" style="left:148px;top:241.5px;width:3px;height:3px;background:#262626"></div>
<div class="r" style="left:148px;top:247px;width:3px;height:3px;background:#262626"></div>
<div class="r" style="left:148px;top:252.5px;width:3px;height:3px;background:#262626"></div>
<div class="r" style="left:162px;top:232px;width:106.5px;height:30px;background:#fff;border:1px solid #d8d2d4;border-radius:5px"></div>
<svg class="i" style="left:169px;top:239px;" width="18" height="17" viewBox="0 0 18 17"><path d="M2 1.5 L16 15.5 M16 1.5 L2 15.5" stroke="#9e9e9e" stroke-width="1.3"/></svg>
<svg class="i" style="left:196px;top:238px;" width="24" height="18" viewBox="0 0 24 18"><path d="M2 10 L7.5 15.5 L22 2" fill="none" stroke="#9e9e9e" stroke-width="1.3"/></svg>
<div class="t" style="left:229.0px;top:235.22px;font-size:21.00px;line-height:21.00px;color:#1f1f1f;transform:scaleX(1.1878);font-family:'Liberation Serif',serif;font-style:italic;">fx</div>
<svg class="i" style="left:252.0px;top:245.0px;" width="14" height="8" viewBox="0 0 14 8"><path d="M1 1 L7.0 7.0 L13.0 1" fill="none" stroke="#777" stroke-width="1.1" stroke-linecap="round" stroke-linejoin="round"/></svg>
<div class="r" style="left:274px;top:232px;width:1636px;height:53px;background:#fff;border:1px solid #d8d2d4;border-radius:6px"></div>
<div class="t" style="left:287.3px;top:239.88px;font-size:15.50px;line-height:15.50px;color:#262626;transform:scaleX(1.0342);">name</div>
<svg class="i" style="left:1891px;top:241px;" width="15" height="9" viewBox="0 0 15 9"><path d="M1.5 7.5 L7.5 1.5 L13.5 7.5" fill="none" stroke="#262626" stroke-width="1.3"/></svg>
<div class="r" style="left:0px;top:294px;width:1894px;height:659px;background:#fff;overflow:hidden"></div>
<div class="r" style="left:28px;top:314px;width:680px;height:460px;background:#c6c6c6"></div>
<div class="r" style="left:29px;top:315px;width:67px;height:19px;background:#fff"></div>
<div class="r" style="left:96px;top:314px;width:1px;height:639px;background:rgba(0,0,0,0.12)"></div>
<div class="r" style="left:164px;top:314px;width:1px;height:639px;background:rgba(0,0,0,0.12)"></div>
<div class="r" style="left:232px;top:314px;width:1px;height:639px;background:rgba(0,0,0,0.12)"></div>
<div class="r" style="left:300px;top:314px;width:1px;height:639px;background:rgba(0,0,0,0.12)"></div>
<div class="r" style="left:368px;top:314px;width:1px;height:639px;background:rgba(0,0,0,0.12)"></div>
<div class="r" style="left:436px;top:314px;width:1px;height:639px;background:rgba(0,0,0,0.12)"></div>
<div class="r" style="left:504px;top:314px;width:1px;height:639px;background:rgba(0,0,0,0.12)"></div>
<div class="r" style="left:572px;top:314px;width:1px;height:639px;background:rgba(0,0,0,0.12)"></div>
<div class="r" style="left:640px;top:314px;width:1px;height:639px;background:rgba(0,0,0,0.12)"></div>
<div class="r" style="left:708px;top:314px;width:1px;height:639px;background:rgba(0,0,0,0.12)"></div>
<div class="r" style="left:776px;top:314px;width:1px;height:639px;background:rgba(0,0,0,0.12)"></div>
<div class="r" style="left:844px;top:314px;width:1px;height:639px;background:rgba(0,0,0,0.12)"></div>
<div class="r" style="left:912px;top:314px;width:1px;height:639px;background:rgba(0,0,0,0.12)"></div>
<div class="r" style="left:980px;top:314px;width:1px;height:639px;background:rgba(0,0,0,0.12)"></div>
<div class="r" style="left:1048px;top:314px;width:1px;height:639px;background:rgba(0,0,0,0.12)"></div>
<div class="r" style="left:1116px;top:314px;width:1px;height:639px;background:rgba(0,0,0,0.12)"></div>
<div class="r" style="left:1184px;top:314px;width:1px;height:639px;background:rgba(0,0,0,0.12)"></div>
<div class="r" style="left:1252px;top:314px;width:1px;height:639px;background:rgba(0,0,0,0.12)"></div>
<div class="r" style="left:1320px;top:314px;width:1px;height:639px;background:rgba(0,0,0,0.12)"></div>
<div class="r" style="left:1388px;top:314px;width:1px;height:639px;background:rgba(0,0,0,0.12)"></div>
<div class="r" style="left:1456px;top:314px;width:1px;height:639px;background:rgba(0,0,0,0.12)"></div>
<div class="r" style="left:1524px;top:314px;width:1px;height:639px;background:rgba(0,0,0,0.12)"></div>
<div class="r" style="left:1592px;top:314px;width:1px;height:639px;background:rgba(0,0,0,0.12)"></div>
<div class="r" style="left:1660px;top:314px;width:1px;height:639px;background:rgba(0,0,0,0.12)"></div>
<div class="r" style="left:1728px;top:314px;width:1px;height:639px;background:rgba(0,0,0,0.12)"></div>
<div class="r" style="left:1796px;top:314px;width:1px;height:639px;background:rgba(0,0,0,0.12)"></div>
<div class="r" style="left:1864px;top:314px;width:1px;height:639px;background:rgba(0,0,0,0.12)"></div>
<div class="r" style="left:28px;top:334px;width:1866px;height:1px;background:rgba(0,0,0,0.12)"></div>
<div class="r" style="left:28px;top:354px;width:1866px;height:1px;background:rgba(0,0,0,0.12)"></div>
<div class="r" style="left:28px;top:374px;width:1866px;height:1px;background:rgba(0,0,0,0.12)"></div>
<div class="r" style="left:28px;top:394px;width:1866px;height:1px;background:rgba(0,0,0,0.12)"></div>
<div class="r" style="left:28px;top:414px;width:1866px;height:1px;background:rgba(0,0,0,0.12)"></div>
<div class="r" style="left:28px;top:434px;width:1866px;height:1px;background:rgba(0,0,0,0.12)"></div>
<div class="r" style="left:28px;top:454px;width:1866px;height:1px;background:rgba(0,0,0,0.12)"></div>
<div class="r" style="left:28px;top:474px;width:1866px;height:1px;background:rgba(0,0,0,0.12)"></div>
<div class="r" style="left:28px;top:494px;width:1866px;height:1px;background:rgba(0,0,0,0.12)"></div>
<div class="r" style="left:28px;top:514px;width:1866px;height:1px;background:rgba(0,0,0,0.12)"></div>
<div class="r" style="left:28px;top:534px;width:1866px;height:1px;background:rgba(0,0,0,0.12)"></div>
<div class="r" style="left:28px;top:554px;width:1866px;height:1px;background:rgba(0,0,0,0.12)"></div>
<div class="r" style="left:28px;top:574px;width:1866px;height:1px;background:rgba(0,0,0,0.12)"></div>
<div class="r" style="left:28px;top:594px;width:1866px;height:1px;background:rgba(0,0,0,0.12)"></div>
<div class="r" style="left:28px;top:614px;width:1866px;height:1px;background:rgba(0,0,0,0.12)"></div>
<div class="r" style="left:28px;top:634px;width:1866px;height:1px;background:rgba(0,0,0,0.12)"></div>
<div class="r" style="left:28px;top:654px;width:1866px;height:1px;background:rgba(0,0,0,0.12)"></div>
<div class="r" style="left:28px;top:674px;width:1866px;height:1px;background:rgba(0,0,0,0.12)"></div>
<div class="r" style="left:28px;top:694px;width:1866px;height:1px;background:rgba(0,0,0,0.12)"></div>
<div class="r" style="left:28px;top:714px;width:1866px;height:1px;background:rgba(0,0,0,0.12)"></div>
<div class="r" style="left:28px;top:734px;width:1866px;height:1px;background:rgba(0,0,0,0.12)"></div>
<div class="r" style="left:28px;top:754px;width:1866px;height:1px;background:rgba(0,0,0,0.12)"></div>
<div class="r" style="left:28px;top:774px;width:1866px;height:1px;background:rgba(0,0,0,0.12)"></div>
<div class="r" style="left:28px;top:794px;width:1866px;height:1px;background:rgba(0,0,0,0.12)"></div>
<div class="r" style="left:28px;top:814px;width:1866px;height:1px;background:rgba(0,0,0,0.12)"></div>
<div class="r" style="left:28px;top:834px;width:1866px;height:1px;background:rgba(0,0,0,0.12)"></div>
<div class="r" style="left:28px;top:854px;width:1866px;height:1px;background:rgba(0,0,0,0.12)"></div>
<div class="r" style="left:28px;top:874px;width:1866px;height:1px;background:rgba(0,0,0,0.12)"></div>
<div class="r" style="left:28px;top:894px;width:1866px;height:1px;background:rgba(0,0,0,0.12)"></div>
<div class="r" style="left:28px;top:914px;width:1866px;height:1px;background:rgba(0,0,0,0.12)"></div>
<div class="r" style="left:28px;top:934px;width:1866px;height:1px;background:rgba(0,0,0,0.12)"></div>
<div class="r" style="left:0px;top:294px;width:1894px;height:20px;background:#efefef"></div>
<div class="r" style="left:28px;top:294px;width:680px;height:20px;background:#d2d2d2"></div>
<div class="r" style="left:0px;top:314px;width:1894px;height:1px;background:#a0a0a0"></div>
<div class="r" style="left:96px;top:294px;width:1px;height:19px;background:#c4c4c4"></div>
<div class="t" style="left:58.2px;top:298.00px;font-size:13.00px;line-height:13.00px;color:#176b3a;">A</div>
<div class="r" style="left:164px;top:294px;width:1px;height:19px;background:#c4c4c4"></div>
<div class="t" style="left:126.2px;top:298.00px;font-size:13.00px;line-height:13.00px;color:#176b3a;">B</div>
<div class="r" style="left:232px;top:294px;width:1px;height:19px;background:#c4c4c4"></div>
<div class="t" style="left:193.8px;top:298.00px;font-size:13.00px;line-height:13.00px;color:#176b3a;">C</div>
<div class="r" style="left:300px;top:294px;width:1px;height:19px;background:#c4c4c4"></div>
<div class="t" style="left:261.8px;top:298.00px;font-size:13.00px;line-height:13.00px;color:#176b3a;">D</div>
<div class="r" style="left:368px;top:294px;width:1px;height:19px;background:#c4c4c4"></div>
<div class="t" style="left:330.2px;top:298.00px;font-size:13.00px;line-height:13.00px;color:#176b3a;">E</div>
<div class="r" style="left:436px;top:294px;width:1px;height:19px;background:#c4c4c4"></div>
<div class="t" style="left:398.5px;top:298.00px;font-size:13.00px;line-height:13.00px;color:#176b3a;">F</div>
<div class="r" style="left:504px;top:294px;width:1px;height:19px;background:#c4c4c4"></div>
<div class="t" style="left:465.4px;top:298.00px;font-size:13.00px;line-height:13.00px;color:#176b3a;">G</div>
<div class="r" style="left:572px;top:294px;width:1px;height:19px;background:#c4c4c4"></div>
<div class="t" style="left:533.8px;top:298.00px;font-size:13.00px;line-height:13.00px;color:#176b3a;">H</div>
<div class="r" style="left:640px;top:294px;width:1px;height:19px;background:#c4c4c4"></div>
<div class="t" style="left:604.7px;top:298.00px;font-size:13.00px;line-height:13.00px;color:#176b3a;">I</div>
<div class="r" style="left:708px;top:294px;width:1px;height:19px;background:#c4c4c4"></div>
<div class="t" style="left:671.2px;top:298.00px;font-size:13.00px;line-height:13.00px;color:#176b3a;">J</div>
<div class="r" style="left:776px;top:294px;width:1px;height:19px;background:#c4c4c4"></div>
<div class="t" style="left:738.2px;top:298.00px;font-size:13.00px;line-height:13.00px;color:#1f1f1f;">K</div>
<div class="r" style="left:844px;top:294px;width:1px;height:19px;background:#c4c4c4"></div>
<div class="t" style="left:806.9px;top:298.00px;font-size:13.00px;line-height:13.00px;color:#1f1f1f;">L</div>
<div class="r" style="left:912px;top:294px;width:1px;height:19px;background:#c4c4c4"></div>
<div class="t" style="left:873.1px;top:298.00px;font-size:13.00px;line-height:13.00px;color:#1f1f1f;">M</div>
<div class="r" style="left:980px;top:294px;width:1px;height:19px;background:#c4c4c4"></div>
<div class="t" style="left:941.8px;top:298.00px;font-size:13.00px;line-height:13.00px;color:#1f1f1f;">N</div>
<div class="r" style="left:1048px;top:294px;width:1px;height:19px;background:#c4c4c4"></div>
<div class="t" style="left:1009.4px;top:298.00px;font-size:13.00px;line-height:13.00px;color:#1f1f1f;">O</div>
<div class="r" style="left:1116px;top:294px;width:1px;height:19px;background:#c4c4c4"></div>
<div class="t" style="left:1078.2px;top:298.00px;font-size:13.00px;line-height:13.00px;color:#1f1f1f;">P</div>
<div class="r" style="left:1184px;top:294px;width:1px;height:19px;background:#c4c4c4"></div>
<div class="t" style="left:1145.4px;top:298.00px;font-size:13.00px;line-height:13.00px;color:#1f1f1f;">Q</div>
<div class="r" style="left:1252px;top:294px;width:1px;height:19px;background:#c4c4c4"></div>
<div class="t" style="left:1213.8px;top:298.00px;font-size:13.00px;line-height:13.00px;color:#1f1f1f;">R</div>
<div class="r" style="left:1320px;top:294px;width:1px;height:19px;background:#c4c4c4"></div>
<div class="t" style="left:1282.2px;top:298.00px;font-size:13.00px;line-height:13.00px;color:#1f1f1f;">S</div>
<div class="r" style="left:1388px;top:294px;width:1px;height:19px;background:#c4c4c4"></div>
<div class="t" style="left:1350.5px;top:298.00px;font-size:13.00px;line-height:13.00px;color:#1f1f1f;">T</div>
<div class="r" style="left:1456px;top:294px;width:1px;height:19px;background:#c4c4c4"></div>
<div class="t" style="left:1417.8px;top:298.00px;font-size:13.00px;line-height:13.00px;color:#1f1f1f;">U</div>
<div class="r" style="left:1524px;top:294px;width:1px;height:19px;background:#c4c4c4"></div>
<div class="t" style="left:1486.2px;top:298.00px;font-size:13.00px;line-height:13.00px;color:#1f1f1f;">V</div>
<div class="r" style="left:1592px;top:294px;width:1px;height:19px;background:#c4c4c4"></div>
<div class="t" style="left:1552.4px;top:298.00px;font-size:13.00px;line-height:13.00px;color:#1f1f1f;">W</div>
<div class="r" style="left:1660px;top:294px;width:1px;height:19px;background:#c4c4c4"></div>
<div class="t" style="left:1622.2px;top:298.00px;font-size:13.00px;line-height:13.00px;color:#1f1f1f;">X</div>
<div class="r" style="left:1728px;top:294px;width:1px;height:19px;background:#c4c4c4"></div>
<div class="t" style="left:1690.2px;top:298.00px;font-size:13.00px;line-height:13.00px;color:#1f1f1f;">Y</div>
<div class="r" style="left:1796px;top:294px;width:1px;height:19px;background:#c4c4c4"></div>
<div class="t" style="left:1758.5px;top:298.00px;font-size:13.00px;line-height:13.00px;color:#1f1f1f;">Z</div>
<div class="r" style="left:1864px;top:294px;width:1px;height:19px;background:#c4c4c4"></div>
<div class="t" style="left:1821.8px;top:298.00px;font-size:13.00px;line-height:13.00px;color:#1f1f1f;">AA</div>
<div class="r" style="left:1932px;top:294px;width:1px;height:19px;background:#c4c4c4"></div>
<div class="t" style="left:1889.8px;top:298.00px;font-size:13.00px;line-height:13.00px;color:#1f1f1f;">AB</div>
<div class="r" style="left:0px;top:294px;width:28px;height:19px;background:#efefef"></div>
<svg class="i" style="left:0px;top:294px;" width="28" height="20" viewBox="0 0 28 20"><path d="M25 4 V16.5 H12.5 Z" fill="#b3b3b3"/></svg>
<div class="r" style="left:27px;top:294px;width:1px;height:20px;background:#efefef"></div>
<div class="r" style="left:0px;top:314px;width:28px;height:639px;background:#efefef"></div>
<div class="r" style="left:0px;top:314px;width:28px;height:460px;background:#d2d2d2"></div>
<div class="r" style="left:28px;top:314px;width:1px;height:639px;background:#a0a0a0"></div>
<div class="r" style="left:0px;top:334px;width:28px;height:1px;background:#c4c4c4"></div>
<div class="t" style="left:10.1px;top:317.98px;font-size:14.20px;line-height:14.20px;color:#176b3a;">1</div>
<div class="r" style="left:0px;top:354px;width:28px;height:1px;background:#c4c4c4"></div>
<div class="t" style="left:10.1px;top:337.98px;font-size:14.20px;line-height:14.20px;color:#176b3a;">2</div>
<div class="r" style="left:0px;top:374px;width:28px;height:1px;background:#c4c4c4"></div>
<div class="t" style="left:10.1px;top:357.98px;font-size:14.20px;line-height:14.20px;color:#176b3a;">3</div>
<div class="r" style="left:0px;top:394px;width:28px;height:1px;background:#c4c4c4"></div>
<div class="t" style="left:10.1px;top:377.98px;font-size:14.20px;line-height:14.20px;color:#176b3a;">4</div>
<div class="r" style="left:0px;top:414px;width:28px;height:1px;background:#c4c4c4"></div>
<div class="t" style="left:10.1px;top:397.98px;font-size:14.20px;line-height:14.20px;color:#176b3a;">5</div>
<div class="r" style="left:0px;top:434px;width:28px;height:1px;background:#c4c4c4"></div>
<div class="t" style="left:10.1px;top:417.98px;font-size:14.20px;line-height:14.20px;color:#176b3a;">6</div>
<div class="r" style="left:0px;top:454px;width:28px;height:1px;background:#c4c4c4"></div>
<div class="t" style="left:10.1px;top:437.98px;font-size:14.20px;line-height:14.20px;color:#176b3a;">7</div>
<div class="r" style="left:0px;top:474px;width:28px;height:1px;background:#c4c4c4"></div>
<div class="t" style="left:10.1px;top:457.98px;font-size:14.20px;line-height:14.20px;color:#176b3a;">8</div>
<div class="r" style="left:0px;top:494px;width:28px;height:1px;background:#c4c4c4"></div>
<div class="t" style="left:10.1px;top:477.98px;font-size:14.20px;line-height:14.20px;color:#176b3a;">9</div>
<div class="r" style="left:0px;top:514px;width:28px;height:1px;background:#c4c4c4"></div>
<div class="t" style="left:6.1px;top:497.98px;font-size:14.20px;line-height:14.20px;color:#176b3a;">10</div>
<div class="r" style="left:0px;top:534px;width:28px;height:1px;background:#c4c4c4"></div>
<div class="t" style="left:6.6px;top:517.98px;font-size:14.20px;line-height:14.20px;color:#176b3a;">11</div>
<div class="r" style="left:0px;top:554px;width:28px;height:1px;background:#c4c4c4"></div>
<div class="t" style="left:6.1px;top:537.98px;font-size:14.20px;line-height:14.20px;color:#176b3a;">12</div>
<div class="r" style="left:0px;top:574px;width:28px;height:1px;background:#c4c4c4"></div>
<div class="t" style="left:6.1px;top:557.98px;font-size:14.20px;line-height:14.20px;color:#176b3a;">13</div>
<div class="r" style="left:0px;top:594px;width:28px;height:1px;background:#c4c4c4"></div>
<div class="t" style="left:6.1px;top:577.98px;font-size:14.20px;line-height:14.20px;color:#176b3a;">14</div>
<div class="r" style="left:0px;top:614px;width:28px;height:1px;background:#c4c4c4"></div>
<div class="t" style="left:6.1px;top:597.98px;font-size:14.20px;line-height:14.20px;color:#176b3a;">15</div>
<div class="r" style="left:0px;top:634px;width:28px;height:1px;background:#c4c4c4"></div>
<div class="t" style="left:6.1px;top:617.98px;font-size:14.20px;line-height:14.20px;color:#176b3a;">16</div>
<div class="r" style="left:0px;top:654px;width:28px;height:1px;background:#c4c4c4"></div>
<div class="t" style="left:6.1px;top:637.98px;font-size:14.20px;line-height:14.20px;color:#176b3a;">17</div>
<div class="r" style="left:0px;top:674px;width:28px;height:1px;background:#c4c4c4"></div>
<div class="t" style="left:6.1px;top:657.98px;font-size:14.20px;line-height:14.20px;color:#176b3a;">18</div>
<div class="r" style="left:0px;top:694px;width:28px;height:1px;background:#c4c4c4"></div>
<div class="t" style="left:6.1px;top:677.98px;font-size:14.20px;line-height:14.20px;color:#176b3a;">19</div>
<div class="r" style="left:0px;top:714px;width:28px;height:1px;background:#c4c4c4"></div>
<div class="t" style="left:6.1px;top:697.98px;font-size:14.20px;line-height:14.20px;color:#176b3a;">20</div>
<div class="r" style="left:0px;top:734px;width:28px;height:1px;background:#c4c4c4"></div>
<div class="t" style="left:6.1px;top:717.98px;font-size:14.20px;line-height:14.20px;color:#176b3a;">21</div>
<div class="r" style="left:0px;top:754px;width:28px;height:1px;background:#c4c4c4"></div>
<div class="t" style="left:6.1px;top:737.98px;font-size:14.20px;line-height:14.20px;color:#176b3a;">22</div>
<div class="r" style="left:0px;top:774px;width:28px;height:1px;background:#c4c4c4"></div>
<div class="t" style="left:6.1px;top:757.98px;font-size:14.20px;line-height:14.20px;color:#176b3a;">23</div>
<div class="r" style="left:0px;top:794px;width:28px;height:1px;background:#c4c4c4"></div>
<div class="t" style="left:6.1px;top:777.98px;font-size:14.20px;line-height:14.20px;color:#1f1f1f;">24</div>
<div class="r" style="left:0px;top:814px;width:28px;height:1px;background:#c4c4c4"></div>
<div class="t" style="left:6.1px;top:797.98px;font-size:14.20px;line-height:14.20px;color:#1f1f1f;">25</div>
<div class="r" style="left:0px;top:834px;width:28px;height:1px;background:#c4c4c4"></div>
<div class="t" style="left:6.1px;top:817.98px;font-size:14.20px;line-height:14.20px;color:#1f1f1f;">26</div>
<div class="r" style="left:0px;top:854px;width:28px;height:1px;background:#c4c4c4"></div>
<div class="t" style="left:6.1px;top:837.98px;font-size:14.20px;line-height:14.20px;color:#1f1f1f;">27</div>
<div class="r" style="left:0px;top:874px;width:28px;height:1px;background:#c4c4c4"></div>
<div class="t" style="left:6.1px;top:857.98px;font-size:14.20px;line-height:14.20px;color:#1f1f1f;">28</div>
<div class="r" style="left:0px;top:894px;width:28px;height:1px;background:#c4c4c4"></div>
<div class="t" style="left:6.1px;top:877.98px;font-size:14.20px;line-height:14.20px;color:#1f1f1f;">29</div>
<div class="r" style="left:0px;top:914px;width:28px;height:1px;background:#c4c4c4"></div>
<div class="t" style="left:6.1px;top:897.98px;font-size:14.20px;line-height:14.20px;color:#1f1f1f;">30</div>
<div class="r" style="left:0px;top:934px;width:28px;height:1px;background:#c4c4c4"></div>
<div class="t" style="left:6.1px;top:917.98px;font-size:14.20px;line-height:14.20px;color:#1f1f1f;">31</div>
<div class="r" style="left:0px;top:954px;width:28px;height:1px;background:#c4c4c4"></div>
<div class="t" style="left:6.1px;top:937.98px;font-size:14.20px;line-height:14.20px;color:#1f1f1f;">32</div>
<div class="r" style="left:31.0px;top:315px;width:66px;height:19px;overflow:hidden"><div class="t" style="left:0;top:0;font-size:14.4px;line-height:20px;color:#000;transform-origin:0 15px;transform:scale(1.040,1.09)">name</div></div>
<div class="r" style="left:99.0px;top:315px;width:66px;height:19px;overflow:hidden"><div class="t" style="left:0;top:0;font-size:14.4px;line-height:20px;color:#000;transform-origin:0 15px;transform:scale(0.996,1.09)">run.no.in.std</div></div>
<div class="r" style="left:167.0px;top:315px;width:66px;height:19px;overflow:hidden"><div class="t" style="left:0;top:0;font-size:14.4px;line-height:20px;color:#000;transform-origin:0 15px;transform:scale(1.012,1.09)">run.no</div></div>
<div class="r" style="left:235.0px;top:315px;width:66px;height:19px;overflow:hidden"><div class="t" style="left:0;top:0;font-size:14.4px;line-height:20px;color:#000;transform-origin:0 15px;transform:scale(1.004,1.09)">run.no.std</div></div>
<div class="r" style="left:303.0px;top:315px;width:66px;height:19px;overflow:hidden"><div class="t" style="left:0;top:0;font-size:14.4px;line-height:20px;color:#000;transform-origin:0 15px;transform:scale(1.018,1.09)">Algorithm</div></div>
<div class="r" style="left:371.0px;top:315px;width:66px;height:19px;overflow:hidden"><div class="t" style="left:0;top:0;font-size:14.4px;line-height:20px;color:#000;transform-origin:0 15px;transform:scale(1.016,1.09)">DeckArrangement</div></div>
<div class="r" style="left:439.0px;top:315px;width:66px;height:19px;overflow:hidden"><div class="t" style="left:0;top:0;font-size:14.4px;line-height:20px;color:#000;transform-origin:0 15px;transform:scale(1.016,1.09)">Program</div></div>
<div class="r" style="left:507.0px;top:315px;width:66px;height:19px;overflow:hidden"><div class="t" style="left:0;top:0;font-size:14.4px;line-height:20px;color:#000;transform-origin:0 15px;transform:scale(0.993,1.09)">MemPageSize</div></div>
<div class="r" style="left:575.0px;top:315px;width:66px;height:19px;overflow:hidden"><div class="t" style="left:0;top:0;font-size:14.4px;line-height:20px;color:#000;transform-origin:0 15px;transform:scale(1.040,1.09)">time</div></div>
<div class="r" style="left:643.0px;top:315px;width:65px;height:19px;overflow:hidden"><div class="t" style="left:0;top:0;font-size:14.4px;line-height:20px;color:#000;transform-origin:0 15px;transform:scale(1.030,1.09)">log10time</div></div>
<div class="t" style="left:86.0px;top:335px;font-size:14.4px;line-height:20px;color:#000;transform-origin:0 15px;transform:scaleY(1.09)">1</div>
<div class="t" style="left:154.0px;top:335px;font-size:14.4px;line-height:20px;color:#000;transform-origin:0 15px;transform:scaleY(1.09)">1</div>
<div class="t" style="left:222.0px;top:335px;font-size:14.4px;line-height:20px;color:#000;transform-origin:0 15px;transform:scaleY(1.09)">1</div>
<div class="t" style="left:290.0px;top:335px;font-size:14.4px;line-height:20px;color:#000;transform-origin:0 15px;transform:scaleY(1.09)">1</div>
<div class="r" style="left:303.0px;top:335px;width:66px;height:19px;overflow:hidden"><div class="t" style="left:0;top:0;font-size:14.4px;line-height:20px;color:#000;transform-origin:0 15px;transform:scale(0.900,1.09)">LRUV</div></div>
<div class="r" style="left:371.0px;top:335px;width:66px;height:19px;overflow:hidden"><div class="t" style="left:0;top:0;font-size:14.4px;line-height:20px;color:#000;transform-origin:0 15px;transform:scale(0.900,1.09)">GROUP</div></div>
<div class="r" style="left:439.0px;top:335px;width:66px;height:19px;overflow:hidden"><div class="t" style="left:0;top:0;font-size:14.4px;line-height:20px;color:#000;transform-origin:0 15px;transform:scale(1.003,1.09)">Small</div></div>
<div class="r" style="left:507.0px;top:335px;width:66px;height:19px;overflow:hidden"><div class="t" style="left:0;top:0;font-size:14.4px;line-height:20px;color:#000;transform-origin:0 15px;transform:scale(0.963,1.09)">24P</div></div>
<div class="t" style="left:614.0px;top:335px;font-size:14.4px;line-height:20px;color:#000;transform-origin:0 15px;transform:scaleY(1.09)">480</div>
<div class="t" style="left:657.9px;top:335px;font-size:14.4px;line-height:20px;color:#000;transform-origin:0 15px;transform:scaleY(1.09)">268124</div>
<div class="t" style="left:86.0px;top:355px;font-size:14.4px;line-height:20px;color:#000;transform-origin:0 15px;transform:scaleY(1.09)">2</div>
<div class="t" style="left:154.0px;top:355px;font-size:14.4px;line-height:20px;color:#000;transform-origin:0 15px;transform:scaleY(1.09)">2</div>
<div class="t" style="left:222.0px;top:355px;font-size:14.4px;line-height:20px;color:#000;transform-origin:0 15px;transform:scaleY(1.09)">2</div>
<div class="t" style="left:290.0px;top:355px;font-size:14.4px;line-height:20px;color:#000;transform-origin:0 15px;transform:scaleY(1.09)">2</div>
<div class="r" style="left:303.0px;top:355px;width:66px;height:19px;overflow:hidden"><div class="t" style="left:0;top:0;font-size:14.4px;line-height:20px;color:#000;transform-origin:0 15px;transform:scale(0.900,1.09)">FIFO</div></div>
<div class="r" style="left:371.0px;top:355px;width:66px;height:19px;overflow:hidden"><div class="t" style="left:0;top:0;font-size:14.4px;line-height:20px;color:#000;transform-origin:0 15px;transform:scale(0.900,1.09)">GROUP</div></div>
<div class="r" style="left:439.0px;top:355px;width:66px;height:19px;overflow:hidden"><div class="t" style="left:0;top:0;font-size:14.4px;line-height:20px;color:#000;transform-origin:0 15px;transform:scale(1.003,1.09)">Small</div></div>
<div class="r" style="left:507.0px;top:355px;width:66px;height:19px;overflow:hidden"><div class="t" style="left:0;top:0;font-size:14.4px;line-height:20px;color:#000;transform-origin:0 15px;transform:scale(0.963,1.09)">24P</div></div>
<div class="t" style="left:598.0px;top:355px;font-size:14.4px;line-height:20px;color:#000;transform-origin:0 15px;transform:scaleY(1.09)">23134</div>
<div class="t" style="left:657.9px;top:355px;font-size:14.4px;line-height:20px;color:#000;transform-origin:0 15px;transform:scaleY(1.09)">436425</div>
<div class="t" style="left:86.0px;top:375px;font-size:14.4px;line-height:20px;color:#000;transform-origin:0 15px;transform:scaleY(1.09)">3</div>
<div class="t" style="left:154.0px;top:375px;font-size:14.4px;line-height:20px;color:#000;transform-origin:0 15px;transform:scaleY(1.09)">3</div>
<div class="t" style="left:222.0px;top:375px;font-size:14.4px;line-height:20px;color:#000;transform-origin:0 15px;transform:scaleY(1.09)">3</div>
<div class="t" style="left:290.0px;top:375px;font-size:14.4px;line-height:20px;color:#000;transform-origin:0 15px;transform:scaleY(1.09)">3</div>
<div class="r" style="left:303.0px;top:375px;width:66px;height:19px;overflow:hidden"><div class="t" style="left:0;top:0;font-size:14.4px;line-height:20px;color:#000;transform-origin:0 15px;transform:scale(0.900,1.09)">RAND</div></div>
<div class="r" style="left:371.0px;top:375px;width:66px;height:19px;overflow:hidden"><div class="t" style="left:0;top:0;font-size:14.4px;line-height:20px;color:#000;transform-origin:0 15px;transform:scale(0.900,1.09)">GROUP</div></div>
<div class="r" style="left:439.0px;top:375px;width:66px;height:19px;overflow:hidden"><div class="t" style="left:0;top:0;font-size:14.4px;line-height:20px;color:#000;transform-origin:0 15px;transform:scale(1.003,1.09)">Small</div></div>
<div class="r" style="left:507.0px;top:375px;width:66px;height:19px;overflow:hidden"><div class="t" style="left:0;top:0;font-size:14.4px;line-height:20px;color:#000;transform-origin:0 15px;transform:scale(0.963,1.09)">24P</div></div>
<div class="t" style="left:606.0px;top:375px;font-size:14.4px;line-height:20px;color:#000;transform-origin:0 15px;transform:scaleY(1.09)">6007</div>
<div class="t" style="left:657.9px;top:375px;font-size:14.4px;line-height:20px;color:#000;transform-origin:0 15px;transform:scaleY(1.09)">377866</div>
<div class="t" style="left:86.0px;top:395px;font-size:14.4px;line-height:20px;color:#000;transform-origin:0 15px;transform:scaleY(1.09)">4</div>
<div class="t" style="left:154.0px;top:395px;font-size:14.4px;line-height:20px;color:#000;transform-origin:0 15px;transform:scaleY(1.09)">4</div>
<div class="t" style="left:222.0px;top:395px;font-size:14.4px;line-height:20px;color:#000;transform-origin:0 15px;transform:scaleY(1.09)">4</div>
<div class="t" style="left:290.0px;top:395px;font-size:14.4px;line-height:20px;color:#000;transform-origin:0 15px;transform:scaleY(1.09)">4</div>
<div class="r" style="left:303.0px;top:395px;width:66px;height:19px;overflow:hidden"><div class="t" style="left:0;top:0;font-size:14.4px;line-height:20px;color:#000;transform-origin:0 15px;transform:scale(0.900,1.09)">LRUV</div></div>
<div class="r" style="left:371.0px;top:395px;width:66px;height:19px;overflow:hidden"><div class="t" style="left:0;top:0;font-size:14.4px;line-height:20px;color:#000;transform-origin:0 15px;transform:scale(0.900,1.09)">FREQY</div></div>
<div class="r" style="left:439.0px;top:395px;width:66px;height:19px;overflow:hidden"><div class="t" style="left:0;top:0;font-size:14.4px;line-height:20px;color:#000;transform-origin:0 15px;transform:scale(1.003,1.09)">Small</div></div>
<div class="r" style="left:507.0px;top:395px;width:66px;height:19px;overflow:hidden"><div class="t" style="left:0;top:0;font-size:14.4px;line-height:20px;color:#000;transform-origin:0 15px;transform:scale(0.963,1.09)">24P</div></div>
<div class="t" style="left:598.0px;top:395px;font-size:14.4px;line-height:20px;color:#000;transform-origin:0 15px;transform:scaleY(1.09)">13531</div>
<div class="t" style="left:657.9px;top:395px;font-size:14.4px;line-height:20px;color:#000;transform-origin:0 15px;transform:scaleY(1.09)">413133</div>
<div class="t" style="left:86.0px;top:415px;font-size:14.4px;line-height:20px;color:#000;transform-origin:0 15px;transform:scaleY(1.09)">5</div>
<div class="t" style="left:154.0px;top:415px;font-size:14.4px;line-height:20px;color:#000;transform-origin:0 15px;transform:scaleY(1.09)">5</div>
<div class="t" style="left:222.0px;top:415px;font-size:14.4px;line-height:20px;color:#000;transform-origin:0 15px;transform:scaleY(1.09)">5</div>
<div class="t" style="left:290.0px;top:415px;font-size:14.4px;line-height:20px;color:#000;transform-origin:0 15px;transform:scaleY(1.09)">5</div>
<div class="r" style="left:303.0px;top:415px;width:66px;height:19px;overflow:hidden"><div class="t" style="left:0;top:0;font-size:14.4px;line-height:20px;color:#000;transform-origin:0 15px;transform:scale(0.900,1.09)">FIFO</div></div>
<div class="r" style="left:371.0px;top:415px;width:66px;height:19px;overflow:hidden"><div class="t" style="left:0;top:0;font-size:14.4px;line-height:20px;color:#000;transform-origin:0 15px;transform:scale(0.900,1.09)">FREQY</div></div>
<div class="r" style="left:439.0px;top:415px;width:66px;height:19px;overflow:hidden"><div class="t" style="left:0;top:0;font-size:14.4px;line-height:20px;color:#000;transform-origin:0 15px;transform:scale(1.003,1.09)">Small</div></div>
<div class="r" style="left:507.0px;top:415px;width:66px;height:19px;overflow:hidden"><div class="t" style="left:0;top:0;font-size:14.4px;line-height:20px;color:#000;transform-origin:0 15px;transform:scale(0.963,1.09)">24P</div></div>
<div class="t" style="left:614.0px;top:415px;font-size:14.4px;line-height:20px;color:#000;transform-origin:0 15px;transform:scaleY(1.09)">245</div>
<div class="t" style="left:657.9px;top:415px;font-size:14.4px;line-height:20px;color:#000;transform-origin:0 15px;transform:scaleY(1.09)">238917</div>
<div class="t" style="left:86.0px;top:435px;font-size:14.4px;line-height:20px;color:#000;transform-origin:0 15px;transform:scaleY(1.09)">6</div>
<div class="t" style="left:154.0px;top:435px;font-size:14.4px;line-height:20px;color:#000;transform-origin:0 15px;transform:scaleY(1.09)">6</div>
<div class="t" style="left:222.0px;top:435px;font-size:14.4px;line-height:20px;color:#000;transform-origin:0 15px;transform:scaleY(1.09)">6</div>
<div class="t" style="left:290.0px;top:435px;font-size:14.4px;line-height:20px;color:#000;transform-origin:0 15px;transform:scaleY(1.09)">6</div>
<div class="r" style="left:303.0px;top:435px;width:66px;height:19px;overflow:hidden"><div class="t" style="left:0;top:0;font-size:14.4px;line-height:20px;color:#000;transform-origin:0 15px;transform:scale(0.900,1.09)">RAND</div></div>
<div class="r" style="left:371.0px;top:435px;width:66px;height:19px;overflow:hidden"><div class="t" style="left:0;top:0;font-size:14.4px;line-height:20px;color:#000;transform-origin:0 15px;transform:scale(0.900,1.09)">FREQY</div></div>
<div class="r" style="left:439.0px;top:435px;width:66px;height:19px;overflow:hidden"><div class="t" style="left:0;top:0;font-size:14.4px;line-height:20px;color:#000;transform-origin:0 15px;transform:scale(1.003,1.09)">Small</div></div>
<div class="r" style="left:507.0px;top:435px;width:66px;height:19px;overflow:hidden"><div class="t" style="left:0;top:0;font-size:14.4px;line-height:20px;color:#000;transform-origin:0 15px;transform:scale(0.963,1.09)">24P</div></div>
<div class="t" style="left:614.0px;top:435px;font-size:14.4px;line-height:20px;color:#000;transform-origin:0 15px;transform:scaleY(1.09)">839</div>
<div class="t" style="left:657.9px;top:435px;font-size:14.4px;line-height:20px;color:#000;transform-origin:0 15px;transform:scaleY(1.09)">292376</div>
<div class="t" style="left:86.0px;top:455px;font-size:14.4px;line-height:20px;color:#000;transform-origin:0 15px;transform:scaleY(1.09)">7</div>
<div class="t" style="left:154.0px;top:455px;font-size:14.4px;line-height:20px;color:#000;transform-origin:0 15px;transform:scaleY(1.09)">7</div>
<div class="t" style="left:222.0px;top:455px;font-size:14.4px;line-height:20px;color:#000;transform-origin:0 15px;transform:scaleY(1.09)">7</div>
<div class="t" style="left:290.0px;top:455px;font-size:14.4px;line-height:20px;color:#000;transform-origin:0 15px;transform:scaleY(1.09)">7</div>
<div class="r" style="left:303.0px;top:455px;width:66px;height:19px;overflow:hidden"><div class="t" style="left:0;top:0;font-size:14.4px;line-height:20px;color:#000;transform-origin:0 15px;transform:scale(0.900,1.09)">LRUV</div></div>
<div class="r" style="left:371.0px;top:455px;width:66px;height:19px;overflow:hidden"><div class="t" style="left:0;top:0;font-size:14.4px;line-height:20px;color:#000;transform-origin:0 15px;transform:scale(0.900,1.09)">ALPHA</div></div>
<div class="r" style="left:439.0px;top:455px;width:66px;height:19px;overflow:hidden"><div class="t" style="left:0;top:0;font-size:14.4px;line-height:20px;color:#000;transform-origin:0 15px;transform:scale(1.003,1.09)">Small</div></div>
<div class="r" style="left:507.0px;top:455px;width:66px;height:19px;overflow:hidden"><div class="t" style="left:0;top:0;font-size:14.4px;line-height:20px;color:#000;transform-origin:0 15px;transform:scale(0.963,1.09)">24P</div></div>
<div class="t" style="left:622.0px;top:455px;font-size:14.4px;line-height:20px;color:#000;transform-origin:0 15px;transform:scaleY(1.09)">81</div>
<div class="t" style="left:657.9px;top:455px;font-size:14.4px;line-height:20px;color:#000;transform-origin:0 15px;transform:scaleY(1.09)">190849</div>
<div class="t" style="left:86.0px;top:475px;font-size:14.4px;line-height:20px;color:#000;transform-origin:0 15px;transform:scaleY(1.09)">8</div>
<div class="t" style="left:154.0px;top:475px;font-size:14.4px;line-height:20px;color:#000;transform-origin:0 15px;transform:scaleY(1.09)">8</div>
<div class="t" style="left:222.0px;top:475px;font-size:14.4px;line-height:20px;color:#000;transform-origin:0 15px;transform:scaleY(1.09)">8</div>
<div class="t" style="left:290.0px;top:475px;font-size:14.4px;line-height:20px;color:#000;transform-origin:0 15px;transform:scaleY(1.09)">8</div>
<div class="r" style="left:303.0px;top:475px;width:66px;height:19px;overflow:hidden"><div class="t" style="left:0;top:0;font-size:14.4px;line-height:20px;color:#000;transform-origin:0 15px;transform:scale(0.900,1.09)">FIFO</div></div>
<div class="r" style="left:371.0px;top:475px;width:66px;height:19px;overflow:hidden"><div class="t" style="left:0;top:0;font-size:14.4px;line-height:20px;color:#000;transform-origin:0 15px;transform:scale(0.900,1.09)">ALPHA</div></div>
<div class="r" style="left:439.0px;top:475px;width:66px;height:19px;overflow:hidden"><div class="t" style="left:0;top:0;font-size:14.4px;line-height:20px;color:#000;transform-origin:0 15px;transform:scale(1.003,1.09)">Small</div></div>
<div class="r" style="left:507.0px;top:475px;width:66px;height:19px;overflow:hidden"><div class="t" style="left:0;top:0;font-size:14.4px;line-height:20px;color:#000;transform-origin:0 15px;transform:scale(0.963,1.09)">24P</div></div>
<div class="t" style="left:614.0px;top:475px;font-size:14.4px;line-height:20px;color:#000;transform-origin:0 15px;transform:scaleY(1.09)">237</div>
<div class="t" style="left:657.9px;top:475px;font-size:14.4px;line-height:20px;color:#000;transform-origin:0 15px;transform:scaleY(1.09)">237475</div>
<div class="t" style="left:86.0px;top:495px;font-size:14.4px;line-height:20px;color:#000;transform-origin:0 15px;transform:scaleY(1.09)">9</div>
<div class="t" style="left:154.0px;top:495px;font-size:14.4px;line-height:20px;color:#000;transform-origin:0 15px;transform:scaleY(1.09)">9</div>
<div class="t" style="left:222.0px;top:495px;font-size:14.4px;line-height:20px;color:#000;transform-origin:0 15px;transform:scaleY(1.09)">9</div>
<div class="t" style="left:290.0px;top:495px;font-size:14.4px;line-height:20px;color:#000;transform-origin:0 15px;transform:scaleY(1.09)">9</div>
<div class="r" style="left:303.0px;top:495px;width:66px;height:19px;overflow:hidden"><div class="t" style="left:0;top:0;font-size:14.4px;line-height:20px;color:#000;transform-origin:0 15px;transform:scale(0.900,1.09)">RAND</div></div>
<div class="r" style="left:371.0px;top:495px;width:66px;height:19px;overflow:hidden"><div class="t" style="left:0;top:0;font-size:14.4px;line-height:20px;color:#000;transform-origin:0 15px;transform:scale(0.900,1.09)">ALPHA</div></div>
<div class="r" style="left:439.0px;top:495px;width:66px;height:19px;overflow:hidden"><div class="t" style="left:0;top:0;font-size:14.4px;line-height:20px;color:#000;transform-origin:0 15px;transform:scale(1.003,1.09)">Small</div></div>
<div class="r" style="left:507.0px;top:495px;width:66px;height:19px;overflow:hidden"><div class="t" style="left:0;top:0;font-size:14.4px;line-height:20px;color:#000;transform-origin:0 15px;transform:scale(0.963,1.09)">24P</div></div>
<div class="t" style="left:614.0px;top:495px;font-size:14.4px;line-height:20px;color:#000;transform-origin:0 15px;transform:scaleY(1.09)">265</div>
<div class="t" style="left:657.9px;top:495px;font-size:14.4px;line-height:20px;color:#000;transform-origin:0 15px;transform:scaleY(1.09)">242325</div>
<div class="t" style="left:78.0px;top:515px;font-size:14.4px;line-height:20px;color:#000;transform-origin:0 15px;transform:scaleY(1.09)">10</div>
<div class="t" style="left:146.0px;top:515px;font-size:14.4px;line-height:20px;color:#000;transform-origin:0 15px;transform:scaleY(1.09)">10</div>
<div class="t" style="left:214.0px;top:515px;font-size:14.4px;line-height:20px;color:#000;transform-origin:0 15px;transform:scaleY(1.09)">10</div>
<div class="t" style="left:282.0px;top:515px;font-size:14.4px;line-height:20px;color:#000;transform-origin:0 15px;transform:scaleY(1.09)">10</div>
<div class="r" style="left:303.0px;top:515px;width:66px;height:19px;overflow:hidden"><div class="t" style="left:0;top:0;font-size:14.4px;line-height:20px;color:#000;transform-origin:0 15px;transform:scale(0.900,1.09)">LRUV</div></div>
<div class="r" style="left:371.0px;top:515px;width:66px;height:19px;overflow:hidden"><div class="t" style="left:0;top:0;font-size:14.4px;line-height:20px;color:#000;transform-origin:0 15px;transform:scale(0.900,1.09)">GROUP</div></div>
<div class="r" style="left:439.0px;top:515px;width:66px;height:19px;overflow:hidden"><div class="t" style="left:0;top:0;font-size:14.4px;line-height:20px;color:#000;transform-origin:0 15px;transform:scale(1.007,1.09)">Medium</div></div>
<div class="r" style="left:507.0px;top:515px;width:66px;height:19px;overflow:hidden"><div class="t" style="left:0;top:0;font-size:14.4px;line-height:20px;color:#000;transform-origin:0 15px;transform:scale(0.963,1.09)">24P</div></div>
<div class="t" style="left:622.0px;top:515px;font-size:14.4px;line-height:20px;color:#000;transform-origin:0 15px;transform:scaleY(1.09)">96</div>
<div class="t" style="left:657.9px;top:515px;font-size:14.4px;line-height:20px;color:#000;transform-origin:0 15px;transform:scaleY(1.09)">198227</div>
<div class="t" style="left:79.1px;top:535px;font-size:14.4px;line-height:20px;color:#000;transform-origin:0 15px;transform:scaleY(1.09)">11</div>
<div class="t" style="left:147.1px;top:535px;font-size:14.4px;line-height:20px;color:#000;transform-origin:0 15px;transform:scaleY(1.09)">11</div>
<div class="t" style="left:215.1px;top:535px;font-size:14.4px;line-height:20px;color:#000;transform-origin:0 15px;transform:scaleY(1.09)">11</div>
<div class="t" style="left:283.1px;top:535px;font-size:14.4px;line-height:20px;color:#000;transform-origin:0 15px;transform:scaleY(1.09)">11</div>
<div class="r" style="left:303.0px;top:535px;width:66px;height:19px;overflow:hidden"><div class="t" style="left:0;top:0;font-size:14.4px;line-height:20px;color:#000;transform-origin:0 15px;transform:scale(0.900,1.09)">FIFO</div></div>
<div class="r" style="left:371.0px;top:535px;width:66px;height:19px;overflow:hidden"><div class="t" style="left:0;top:0;font-size:14.4px;line-height:20px;color:#000;transform-origin:0 15px;transform:scale(0.900,1.09)">GROUP</div></div>
<div class="r" style="left:439.0px;top:535px;width:66px;height:19px;overflow:hidden"><div class="t" style="left:0;top:0;font-size:14.4px;line-height:20px;color:#000;transform-origin:0 15px;transform:scale(1.007,1.09)">Medium</div></div>
<div class="r" style="left:507.0px;top:535px;width:66px;height:19px;overflow:hidden"><div class="t" style="left:0;top:0;font-size:14.4px;line-height:20px;color:#000;transform-origin:0 15px;transform:scale(0.963,1.09)">24P</div></div>
<div class="t" style="left:615.0px;top:535px;font-size:14.4px;line-height:20px;color:#000;transform-origin:0 15px;transform:scaleY(1.09)">112</div>
<div class="t" style="left:657.9px;top:535px;font-size:14.4px;line-height:20px;color:#000;transform-origin:0 15px;transform:scaleY(1.09)">204922</div>
<div class="t" style="left:78.0px;top:555px;font-size:14.4px;line-height:20px;color:#000;transform-origin:0 15px;transform:scaleY(1.09)">12</div>
<div class="t" style="left:146.0px;top:555px;font-size:14.4px;line-height:20px;color:#000;transform-origin:0 15px;transform:scaleY(1.09)">12</div>
<div class="t" style="left:214.0px;top:555px;font-size:14.4px;line-height:20px;color:#000;transform-origin:0 15px;transform:scaleY(1.09)">12</div>
<div class="t" style="left:282.0px;top:555px;font-size:14.4px;line-height:20px;color:#000;transform-origin:0 15px;transform:scaleY(1.09)">12</div>
<div class="r" style="left:303.0px;top:555px;width:66px;height:19px;overflow:hidden"><div class="t" style="left:0;top:0;font-size:14.4px;line-height:20px;color:#000;transform-origin:0 15px;transform:scale(0.900,1.09)">RAND</div></div>
<div class="r" style="left:371.0px;top:555px;width:66px;height:19px;overflow:hidden"><div class="t" style="left:0;top:0;font-size:14.4px;line-height:20px;color:#000;transform-origin:0 15px;transform:scale(0.900,1.09)">GROUP</div></div>
<div class="r" style="left:439.0px;top:555px;width:66px;height:19px;overflow:hidden"><div class="t" style="left:0;top:0;font-size:14.4px;line-height:20px;color:#000;transform-origin:0 15px;transform:scale(1.007,1.09)">Medium</div></div>
<div class="r" style="left:507.0px;top:555px;width:66px;height:19px;overflow:hidden"><div class="t" style="left:0;top:0;font-size:14.4px;line-height:20px;color:#000;transform-origin:0 15px;transform:scale(0.963,1.09)">24P</div></div>
<div class="t" style="left:614.0px;top:555px;font-size:14.4px;line-height:20px;color:#000;transform-origin:0 15px;transform:scaleY(1.09)">142</div>
<div class="t" style="left:657.9px;top:555px;font-size:14.4px;line-height:20px;color:#000;transform-origin:0 15px;transform:scaleY(1.09)">215229</div>
<div class="t" style="left:78.0px;top:575px;font-size:14.4px;line-height:20px;color:#000;transform-origin:0 15px;transform:scaleY(1.09)">13</div>
<div class="t" style="left:146.0px;top:575px;font-size:14.4px;line-height:20px;color:#000;transform-origin:0 15px;transform:scaleY(1.09)">13</div>
<div class="t" style="left:214.0px;top:575px;font-size:14.4px;line-height:20px;color:#000;transform-origin:0 15px;transform:scaleY(1.09)">13</div>
<div class="t" style="left:282.0px;top:575px;font-size:14.4px;line-height:20px;color:#000;transform-origin:0 15px;transform:scaleY(1.09)">13</div>
<div class="r" style="left:303.0px;top:575px;width:66px;height:19px;overflow:hidden"><div class="t" style="left:0;top:0;font-size:14.4px;line-height:20px;color:#000;transform-origin:0 15px;transform:scale(0.900,1.09)">LRUV</div></div>
<div class="r" style="left:371.0px;top:575px;width:66px;height:19px;overflow:hidden"><div class="t" style="left:0;top:0;font-size:14.4px;line-height:20px;color:#000;transform-origin:0 15px;transform:scale(0.900,1.09)">FREQY</div></div>
<div class="r" style="left:439.0px;top:575px;width:66px;height:19px;overflow:hidden"><div class="t" style="left:0;top:0;font-size:14.4px;line-height:20px;color:#000;transform-origin:0 15px;transform:scale(1.007,1.09)">Medium</div></div>
<div class="r" style="left:507.0px;top:575px;width:66px;height:19px;overflow:hidden"><div class="t" style="left:0;top:0;font-size:14.4px;line-height:20px;color:#000;transform-origin:0 15px;transform:scale(0.963,1.09)">24P</div></div>
<div class="t" style="left:606.0px;top:575px;font-size:14.4px;line-height:20px;color:#000;transform-origin:0 15px;transform:scaleY(1.09)">4639</div>
<div class="t" style="left:657.9px;top:575px;font-size:14.4px;line-height:20px;color:#000;transform-origin:0 15px;transform:scaleY(1.09)">366642</div>
<div class="t" style="left:78.0px;top:595px;font-size:14.4px;line-height:20px;color:#000;transform-origin:0 15px;transform:scaleY(1.09)">14</div>
<div class="t" style="left:146.0px;top:595px;font-size:14.4px;line-height:20px;color:#000;transform-origin:0 15px;transform:scaleY(1.09)">14</div>
<div class="t" style="left:214.0px;top:595px;font-size:14.4px;line-height:20px;color:#000;transform-origin:0 15px;transform:scaleY(1.09)">14</div>
<div class="t" style="left:282.0px;top:595px;font-size:14.4px;line-height:20px;color:#000;transform-origin:0 15px;transform:scaleY(1.09)">14</div>
<div class="r" style="left:303.0px;top:595px;width:66px;height:19px;overflow:hidden"><div class="t" style="left:0;top:0;font-size:14.4px;line-height:20px;color:#000;transform-origin:0 15px;transform:scale(0.900,1.09)">FIFO</div></div>
<div class="r" style="left:371.0px;top:595px;width:66px;height:19px;overflow:hidden"><div class="t" style="left:0;top:0;font-size:14.4px;line-height:20px;color:#000;transform-origin:0 15px;transform:scale(0.900,1.09)">FREQY</div></div>
<div class="r" style="left:439.0px;top:595px;width:66px;height:19px;overflow:hidden"><div class="t" style="left:0;top:0;font-size:14.4px;line-height:20px;color:#000;transform-origin:0 15px;transform:scale(1.007,1.09)">Medium</div></div>
<div class="r" style="left:507.0px;top:595px;width:66px;height:19px;overflow:hidden"><div class="t" style="left:0;top:0;font-size:14.4px;line-height:20px;color:#000;transform-origin:0 15px;transform:scale(0.963,1.09)">24P</div></div>
<div class="t" style="left:598.0px;top:595px;font-size:14.4px;line-height:20px;color:#000;transform-origin:0 15px;transform:scaleY(1.09)">10012</div>
<div class="t" style="left:657.9px;top:595px;font-size:14.4px;line-height:20px;color:#000;transform-origin:0 15px;transform:scaleY(1.09)">400052</div>
<div class="t" style="left:78.0px;top:615px;font-size:14.4px;line-height:20px;color:#000;transform-origin:0 15px;transform:scaleY(1.09)">15</div>
<div class="t" style="left:146.0px;top:615px;font-size:14.4px;line-height:20px;color:#000;transform-origin:0 15px;transform:scaleY(1.09)">15</div>
<div class="t" style="left:214.0px;top:615px;font-size:14.4px;line-height:20px;color:#000;transform-origin:0 15px;transform:scaleY(1.09)">15</div>
<div class="t" style="left:282.0px;top:615px;font-size:14.4px;line-height:20px;color:#000;transform-origin:0 15px;transform:scaleY(1.09)">15</div>
<div class="r" style="left:303.0px;top:615px;width:66px;height:19px;overflow:hidden"><div class="t" style="left:0;top:0;font-size:14.4px;line-height:20px;color:#000;transform-origin:0 15px;transform:scale(0.900,1.09)">RAND</div></div>
<div class="r" style="left:371.0px;top:615px;width:66px;height:19px;overflow:hidden"><div class="t" style="left:0;top:0;font-size:14.4px;line-height:20px;color:#000;transform-origin:0 15px;transform:scale(0.900,1.09)">FREQY</div></div>
<div class="r" style="left:439.0px;top:615px;width:66px;height:19px;overflow:hidden"><div class="t" style="left:0;top:0;font-size:14.4px;line-height:20px;color:#000;transform-origin:0 15px;transform:scale(1.007,1.09)">Medium</div></div>
<div class="r" style="left:507.0px;top:615px;width:66px;height:19px;overflow:hidden"><div class="t" style="left:0;top:0;font-size:14.4px;line-height:20px;color:#000;transform-origin:0 15px;transform:scale(0.963,1.09)">24P</div></div>
<div class="t" style="left:606.0px;top:615px;font-size:14.4px;line-height:20px;color:#000;transform-origin:0 15px;transform:scaleY(1.09)">3394</div>
<div class="t" style="left:657.9px;top:615px;font-size:14.4px;line-height:20px;color:#000;transform-origin:0 15px;transform:scaleY(1.09)">353071</div>
<div class="t" style="left:78.0px;top:635px;font-size:14.4px;line-height:20px;color:#000;transform-origin:0 15px;transform:scaleY(1.09)">16</div>
<div class="t" style="left:146.0px;top:635px;font-size:14.4px;line-height:20px;color:#000;transform-origin:0 15px;transform:scaleY(1.09)">16</div>
<div class="t" style="left:214.0px;top:635px;font-size:14.4px;line-height:20px;color:#000;transform-origin:0 15px;transform:scaleY(1.09)">16</div>
<div class="t" style="left:282.0px;top:635px;font-size:14.4px;line-height:20px;color:#000;transform-origin:0 15px;transform:scaleY(1.09)">16</div>
<div class="r" style="left:303.0px;top:635px;width:66px;height:19px;overflow:hidden"><div class="t" style="left:0;top:0;font-size:14.4px;line-height:20px;color:#000;transform-origin:0 15px;transform:scale(0.900,1.09)">LRUV</div></div>
<div class="r" style="left:371.0px;top:635px;width:66px;height:19px;overflow:hidden"><div class="t" style="left:0;top:0;font-size:14.4px;line-height:20px;color:#000;transform-origin:0 15px;transform:scale(0.900,1.09)">ALPHA</div></div>
<div class="r" style="left:439.0px;top:635px;width:66px;height:19px;overflow:hidden"><div class="t" style="left:0;top:0;font-size:14.4px;line-height:20px;color:#000;transform-origin:0 15px;transform:scale(1.007,1.09)">Medium</div></div>
<div class="r" style="left:507.0px;top:635px;width:66px;height:19px;overflow:hidden"><div class="t" style="left:0;top:0;font-size:14.4px;line-height:20px;color:#000;transform-origin:0 15px;transform:scale(0.963,1.09)">24P</div></div>
<div class="t" style="left:598.0px;top:635px;font-size:14.4px;line-height:20px;color:#000;transform-origin:0 15px;transform:scaleY(1.09)">12880</div>
<div class="t" style="left:657.9px;top:635px;font-size:14.4px;line-height:20px;color:#000;transform-origin:0 15px;transform:scaleY(1.09)">410992</div>
<div class="t" style="left:78.0px;top:655px;font-size:14.4px;line-height:20px;color:#000;transform-origin:0 15px;transform:scaleY(1.09)">17</div>
<div class="t" style="left:146.0px;top:655px;font-size:14.4px;line-height:20px;color:#000;transform-origin:0 15px;transform:scaleY(1.09)">17</div>
<div class="t" style="left:214.0px;top:655px;font-size:14.4px;line-height:20px;color:#000;transform-origin:0 15px;transform:scaleY(1.09)">17</div>
<div class="t" style="left:282.0px;top:655px;font-size:14.4px;line-height:20px;color:#000;transform-origin:0 15px;transform:scaleY(1.09)">17</div>
<div class="r" style="left:303.0px;top:655px;width:66px;height:19px;overflow:hidden"><div class="t" style="left:0;top:0;font-size:14.4px;line-height:20px;color:#000;transform-origin:0 15px;transform:scale(0.900,1.09)">FIFO</div></div>
<div class="r" style="left:371.0px;top:655px;width:66px;height:19px;overflow:hidden"><div class="t" style="left:0;top:0;font-size:14.4px;line-height:20px;color:#000;transform-origin:0 15px;transform:scale(0.900,1.09)">ALPHA</div></div>
<div class="r" style="left:439.0px;top:655px;width:66px;height:19px;overflow:hidden"><div class="t" style="left:0;top:0;font-size:14.4px;line-height:20px;color:#000;transform-origin:0 15px;transform:scale(1.007,1.09)">Medium</div></div>
<div class="r" style="left:507.0px;top:655px;width:66px;height:19px;overflow:hidden"><div class="t" style="left:0;top:0;font-size:14.4px;line-height:20px;color:#000;transform-origin:0 15px;transform:scale(0.963,1.09)">24P</div></div>
<div class="t" style="left:606.0px;top:655px;font-size:14.4px;line-height:20px;color:#000;transform-origin:0 15px;transform:scaleY(1.09)">1901</div>
<div class="t" style="left:657.9px;top:655px;font-size:14.4px;line-height:20px;color:#000;transform-origin:0 15px;transform:scaleY(1.09)">327898</div>
<div class="t" style="left:78.0px;top:675px;font-size:14.4px;line-height:20px;color:#000;transform-origin:0 15px;transform:scaleY(1.09)">18</div>
<div class="t" style="left:146.0px;top:675px;font-size:14.4px;line-height:20px;color:#000;transform-origin:0 15px;transform:scaleY(1.09)">18</div>
<div class="t" style="left:214.0px;top:675px;font-size:14.4px;line-height:20px;color:#000;transform-origin:0 15px;transform:scaleY(1.09)">18</div>
<div class="t" style="left:282.0px;top:675px;font-size:14.4px;line-height:20px;color:#000;transform-origin:0 15px;transform:scaleY(1.09)">18</div>
<div class="r" style="left:303.0px;top:675px;width:66px;height:19px;overflow:hidden"><div class="t" style="left:0;top:0;font-size:14.4px;line-height:20px;color:#000;transform-origin:0 15px;transform:scale(0.900,1.09)">RAND</div></div>
<div class="r" style="left:371.0px;top:675px;width:66px;height:19px;overflow:hidden"><div class="t" style="left:0;top:0;font-size:14.4px;line-height:20px;color:#000;transform-origin:0 15px;transform:scale(0.900,1.09)">ALPHA</div></div>
<div class="r" style="left:439.0px;top:675px;width:66px;height:19px;overflow:hidden"><div class="t" style="left:0;top:0;font-size:14.4px;line-height:20px;color:#000;transform-origin:0 15px;transform:scale(1.007,1.09)">Medium</div></div>
<div class="r" style="left:507.0px;top:675px;width:66px;height:19px;overflow:hidden"><div class="t" style="left:0;top:0;font-size:14.4px;line-height:20px;color:#000;transform-origin:0 15px;transform:scale(0.963,1.09)">24P</div></div>
<div class="t" style="left:622.0px;top:675px;font-size:14.4px;line-height:20px;color:#000;transform-origin:0 15px;transform:scaleY(1.09)">49</div>
<div class="t" style="left:666.0px;top:675px;font-size:14.4px;line-height:20px;color:#000;transform-origin:0 15px;transform:scaleY(1.09)">16902</div>
<div class="t" style="left:78.0px;top:695px;font-size:14.4px;line-height:20px;color:#000;transform-origin:0 15px;transform:scaleY(1.09)">19</div>
<div class="t" style="left:146.0px;top:695px;font-size:14.4px;line-height:20px;color:#000;transform-origin:0 15px;transform:scaleY(1.09)">19</div>
<div class="t" style="left:214.0px;top:695px;font-size:14.4px;line-height:20px;color:#000;transform-origin:0 15px;transform:scaleY(1.09)">19</div>
<div class="t" style="left:282.0px;top:695px;font-size:14.4px;line-height:20px;color:#000;transform-origin:0 15px;transform:scaleY(1.09)">19</div>
<div class="r" style="left:303.0px;top:695px;width:66px;height:19px;overflow:hidden"><div class="t" style="left:0;top:0;font-size:14.4px;line-height:20px;color:#000;transform-origin:0 15px;transform:scale(0.900,1.09)">LRUV</div></div>
<div class="r" style="left:371.0px;top:695px;width:66px;height:19px;overflow:hidden"><div class="t" style="left:0;top:0;font-size:14.4px;line-height:20px;color:#000;transform-origin:0 15px;transform:scale(0.900,1.09)">GROUP</div></div>
<div class="r" style="left:439.0px;top:695px;width:66px;height:19px;overflow:hidden"><div class="t" style="left:0;top:0;font-size:14.4px;line-height:20px;color:#000;transform-origin:0 15px;transform:scale(1.010,1.09)">Large</div></div>
<div class="r" style="left:507.0px;top:695px;width:66px;height:19px;overflow:hidden"><div class="t" style="left:0;top:0;font-size:14.4px;line-height:20px;color:#000;transform-origin:0 15px;transform:scale(0.963,1.09)">24P</div></div>
<div class="t" style="left:606.0px;top:695px;font-size:14.4px;line-height:20px;color:#000;transform-origin:0 15px;transform:scaleY(1.09)">5838</div>
<div class="t" style="left:657.9px;top:695px;font-size:14.4px;line-height:20px;color:#000;transform-origin:0 15px;transform:scaleY(1.09)">376626</div>
<div class="t" style="left:78.0px;top:715px;font-size:14.4px;line-height:20px;color:#000;transform-origin:0 15px;transform:scaleY(1.09)">20</div>
<div class="t" style="left:146.0px;top:715px;font-size:14.4px;line-height:20px;color:#000;transform-origin:0 15px;transform:scaleY(1.09)">20</div>
<div class="t" style="left:214.0px;top:715px;font-size:14.4px;line-height:20px;color:#000;transform-origin:0 15px;transform:scaleY(1.09)">20</div>
<div class="t" style="left:282.0px;top:715px;font-size:14.4px;line-height:20px;color:#000;transform-origin:0 15px;transform:scaleY(1.09)">20</div>
<div class="r" style="left:303.0px;top:715px;width:66px;height:19px;overflow:hidden"><div class="t" style="left:0;top:0;font-size:14.4px;line-height:20px;color:#000;transform-origin:0 15px;transform:scale(0.900,1.09)">FIFO</div></div>
<div class="r" style="left:371.0px;top:715px;width:66px;height:19px;overflow:hidden"><div class="t" style="left:0;top:0;font-size:14.4px;line-height:20px;color:#000;transform-origin:0 15px;transform:scale(0.900,1.09)">GROUP</div></div>
<div class="r" style="left:439.0px;top:715px;width:66px;height:19px;overflow:hidden"><div class="t" style="left:0;top:0;font-size:14.4px;line-height:20px;color:#000;transform-origin:0 15px;transform:scale(1.010,1.09)">Large</div></div>
<div class="r" style="left:507.0px;top:715px;width:66px;height:19px;overflow:hidden"><div class="t" style="left:0;top:0;font-size:14.4px;line-height:20px;color:#000;transform-origin:0 15px;transform:scale(0.963,1.09)">24P</div></div>
<div class="t" style="left:614.0px;top:715px;font-size:14.4px;line-height:20px;color:#000;transform-origin:0 15px;transform:scaleY(1.09)">134</div>
<div class="t" style="left:666.0px;top:715px;font-size:14.4px;line-height:20px;color:#000;transform-origin:0 15px;transform:scaleY(1.09)">21271</div>
<div class="t" style="left:78.0px;top:735px;font-size:14.4px;line-height:20px;color:#000;transform-origin:0 15px;transform:scaleY(1.09)">21</div>
<div class="t" style="left:146.0px;top:735px;font-size:14.4px;line-height:20px;color:#000;transform-origin:0 15px;transform:scaleY(1.09)">21</div>
<div class="t" style="left:214.0px;top:735px;font-size:14.4px;line-height:20px;color:#000;transform-origin:0 15px;transform:scaleY(1.09)">21</div>
<div class="t" style="left:282.0px;top:735px;font-size:14.4px;line-height:20px;color:#000;transform-origin:0 15px;transform:scaleY(1.09)">21</div>
<div class="r" style="left:303.0px;top:735px;width:66px;height:19px;overflow:hidden"><div class="t" style="left:0;top:0;font-size:14.4px;line-height:20px;color:#000;transform-origin:0 15px;transform:scale(0.900,1.09)">RAND</div></div>
<div class="r" style="left:371.0px;top:735px;width:66px;height:19px;overflow:hidden"><div class="t" style="left:0;top:0;font-size:14.4px;line-height:20px;color:#000;transform-origin:0 15px;transform:scale(0.900,1.09)">GROUP</div></div>
<div class="r" style="left:439.0px;top:735px;width:66px;height:19px;overflow:hidden"><div class="t" style="left:0;top:0;font-size:14.4px;line-height:20px;color:#000;transform-origin:0 15px;transform:scale(1.010,1.09)">Large</div></div>
<div class="r" style="left:507.0px;top:735px;width:66px;height:19px;overflow:hidden"><div class="t" style="left:0;top:0;font-size:14.4px;line-height:20px;color:#000;transform-origin:0 15px;transform:scale(0.963,1.09)">24P</div></div>
<div class="t" style="left:616.1px;top:735px;font-size:14.4px;line-height:20px;color:#000;transform-origin:0 15px;transform:scaleY(1.09)">111</div>
<div class="t" style="left:657.9px;top:735px;font-size:14.4px;line-height:20px;color:#000;transform-origin:0 15px;transform:scaleY(1.09)">204532</div>
<div class="t" style="left:78.0px;top:755px;font-size:14.4px;line-height:20px;color:#000;transform-origin:0 15px;transform:scaleY(1.09)">22</div>
<div class="t" style="left:146.0px;top:755px;font-size:14.4px;line-height:20px;color:#000;transform-origin:0 15px;transform:scaleY(1.09)">22</div>
<div class="t" style="left:214.0px;top:755px;font-size:14.4px;line-height:20px;color:#000;transform-origin:0 15px;transform:scaleY(1.09)">22</div>
<div class="t" style="left:282.0px;top:755px;font-size:14.4px;line-height:20px;color:#000;transform-origin:0 15px;transform:scaleY(1.09)">22</div>
<div class="r" style="left:303.0px;top:755px;width:66px;height:19px;overflow:hidden"><div class="t" style="left:0;top:0;font-size:14.4px;line-height:20px;color:#000;transform-origin:0 15px;transform:scale(0.900,1.09)">LRUV</div></div>
<div class="r" style="left:371.0px;top:755px;width:66px;height:19px;overflow:hidden"><div class="t" style="left:0;top:0;font-size:14.4px;line-height:20px;color:#000;transform-origin:0 15px;transform:scale(0.900,1.09)">FREQY</div></div>
<div class="r" style="left:439.0px;top:755px;width:66px;height:19px;overflow:hidden"><div class="t" style="left:0;top:0;font-size:14.4px;line-height:20px;color:#000;transform-origin:0 15px;transform:scale(1.010,1.09)">Large</div></div>
<div class="r" style="left:507.0px;top:755px;width:66px;height:19px;overflow:hidden"><div class="t" style="left:0;top:0;font-size:14.4px;line-height:20px;color:#000;transform-origin:0 15px;transform:scale(0.963,1.09)">24P</div></div>
<div class="t" style="left:622.0px;top:755px;font-size:14.4px;line-height:20px;color:#000;transform-origin:0 15px;transform:scaleY(1.09)">52</div>
<div class="t" style="left:674.0px;top:755px;font-size:14.4px;line-height:20px;color:#000;transform-origin:0 15px;transform:scaleY(1.09)">1716</div>
<div class="t" style="left:78.0px;top:775px;font-size:14.4px;line-height:20px;color:#000;transform-origin:0 15px;transform:scaleY(1.09)">23</div>
<div class="t" style="left:146.0px;top:775px;font-size:14.4px;line-height:20px;color:#000;transform-origin:0 15px;transform:scaleY(1.09)">23</div>
<div class="t" style="left:214.0px;top:775px;font-size:14.4px;line-height:20px;color:#000;transform-origin:0 15px;transform:scaleY(1.09)">23</div>
<div class="t" style="left:282.0px;top:775px;font-size:14.4px;line-height:20px;color:#000;transform-origin:0 15px;transform:scaleY(1.09)">23</div>
<div class="r" style="left:303.0px;top:775px;width:66px;height:19px;overflow:hidden"><div class="t" style="left:0;top:0;font-size:14.4px;line-height:20px;color:#000;transform-origin:0 15px;transform:scale(0.900,1.09)">FIFO</div></div>
<div class="r" style="left:371.0px;top:775px;width:66px;height:19px;overflow:hidden"><div class="t" style="left:0;top:0;font-size:14.4px;line-height:20px;color:#000;transform-origin:0 15px;transform:scale(0.900,1.09)">FREQY</div></div>
<div class="r" style="left:439.0px;top:775px;width:66px;height:19px;overflow:hidden"><div class="t" style="left:0;top:0;font-size:14.4px;line-height:20px;color:#000;transform-origin:0 15px;transform:scale(1.010,1.09)">Large</div></div>
<div class="r" style="left:507.0px;top:775px;width:66px;height:19px;overflow:hidden"><div class="t" style="left:0;top:0;font-size:14.4px;line-height:20px;color:#000;transform-origin:0 15px;transform:scale(0.963,1.09)">24P</div></div>
<div class="t" style="left:606.0px;top:775px;font-size:14.4px;line-height:20px;color:#000;transform-origin:0 15px;transform:scaleY(1.09)">3688</div>
<div class="t" style="left:657.9px;top:775px;font-size:14.4px;line-height:20px;color:#000;transform-origin:0 15px;transform:scaleY(1.09)">356679</div>
<div class="t" style="left:78.0px;top:795px;font-size:14.4px;line-height:20px;color:#000;transform-origin:0 15px;transform:scaleY(1.09)">24</div>
<div class="t" style="left:146.0px;top:795px;font-size:14.4px;line-height:20px;color:#000;transform-origin:0 15px;transform:scaleY(1.09)">24</div>
<div class="t" style="left:214.0px;top:795px;font-size:14.4px;line-height:20px;color:#000;transform-origin:0 15px;transform:scaleY(1.09)">24</div>
<div class="t" style="left:282.0px;top:795px;font-size:14.4px;line-height:20px;color:#000;transform-origin:0 15px;transform:scaleY(1.09)">24</div>
<div class="r" style="left:303.0px;top:795px;width:66px;height:19px;overflow:hidden"><div class="t" style="left:0;top:0;font-size:14.4px;line-height:20px;color:#000;transform-origin:0 15px;transform:scale(0.900,1.09)">RAND</div></div>
<div class="r" style="left:371.0px;top:795px;width:66px;height:19px;overflow:hidden"><div class="t" style="left:0;top:0;font-size:14.4px;line-height:20px;color:#000;transform-origin:0 15px;transform:scale(0.900,1.09)">FREQY</div></div>
<div class="r" style="left:439.0px;top:795px;width:66px;height:19px;overflow:hidden"><div class="t" style="left:0;top:0;font-size:14.4px;line-height:20px;color:#000;transform-origin:0 15px;transform:scale(1.010,1.09)">Large</div></div>
<div class="r" style="left:507.0px;top:795px;width:66px;height:19px;overflow:hidden"><div class="t" style="left:0;top:0;font-size:14.4px;line-height:20px;color:#000;transform-origin:0 15px;transform:scale(0.963,1.09)">24P</div></div>
<div class="t" style="left:606.0px;top:795px;font-size:14.4px;line-height:20px;color:#000;transform-origin:0 15px;transform:scaleY(1.09)">1348</div>
<div class="t" style="left:657.9px;top:795px;font-size:14.4px;line-height:20px;color:#000;transform-origin:0 15px;transform:scaleY(1.09)">312969</div>
<div class="t" style="left:78.0px;top:815px;font-size:14.4px;line-height:20px;color:#000;transform-origin:0 15px;transform:scaleY(1.09)">25</div>
<div class="t" style="left:146.0px;top:815px;font-size:14.4px;line-height:20px;color:#000;transform-origin:0 15px;transform:scaleY(1.09)">25</div>
<div class="t" style="left:214.0px;top:815px;font-size:14.4px;line-height:20px;color:#000;transform-origin:0 15px;transform:scaleY(1.09)">25</div>
<div class="t" style="left:282.0px;top:815px;font-size:14.4px;line-height:20px;color:#000;transform-origin:0 15px;transform:scaleY(1.09)">25</div>
<div class="r" style="left:303.0px;top:815px;width:66px;height:19px;overflow:hidden"><div class="t" style="left:0;top:0;font-size:14.4px;line-height:20px;color:#000;transform-origin:0 15px;transform:scale(0.900,1.09)">LRUV</div></div>
<div class="r" style="left:371.0px;top:815px;width:66px;height:19px;overflow:hidden"><div class="t" style="left:0;top:0;font-size:14.4px;line-height:20px;color:#000;transform-origin:0 15px;transform:scale(0.900,1.09)">ALPHA</div></div>
<div class="r" style="left:439.0px;top:815px;width:66px;height:19px;overflow:hidden"><div class="t" style="left:0;top:0;font-size:14.4px;line-height:20px;color:#000;transform-origin:0 15px;transform:scale(1.010,1.09)">Large</div></div>
<div class="r" style="left:507.0px;top:815px;width:66px;height:19px;overflow:hidden"><div class="t" style="left:0;top:0;font-size:14.4px;line-height:20px;color:#000;transform-origin:0 15px;transform:scale(0.963,1.09)">24P</div></div>
<div class="t" style="left:614.0px;top:815px;font-size:14.4px;line-height:20px;color:#000;transform-origin:0 15px;transform:scaleY(1.09)">100</div>
<div class="t" style="left:698.0px;top:815px;font-size:14.4px;line-height:20px;color:#000;transform-origin:0 15px;transform:scaleY(1.09)">2</div>
<div class="t" style="left:78.0px;top:835px;font-size:14.4px;line-height:20px;color:#000;transform-origin:0 15px;transform:scaleY(1.09)">26</div>
<div class="t" style="left:146.0px;top:835px;font-size:14.4px;line-height:20px;color:#000;transform-origin:0 15px;transform:scaleY(1.09)">26</div>
<div class="t" style="left:214.0px;top:835px;font-size:14.4px;line-height:20px;color:#000;transform-origin:0 15px;transform:scaleY(1.09)">26</div>
<div class="t" style="left:282.0px;top:835px;font-size:14.4px;line-height:20px;color:#000;transform-origin:0 15px;transform:scaleY(1.09)">26</div>
<div class="r" style="left:303.0px;top:835px;width:66px;height:19px;overflow:hidden"><div class="t" style="left:0;top:0;font-size:14.4px;line-height:20px;color:#000;transform-origin:0 15px;transform:scale(0.900,1.09)">FIFO</div></div>
<div class="r" style="left:371.0px;top:835px;width:66px;height:19px;overflow:hidden"><div class="t" style="left:0;top:0;font-size:14.4px;line-height:20px;color:#000;transform-origin:0 15px;transform:scale(0.900,1.09)">ALPHA</div></div>
<div class="r" style="left:439.0px;top:835px;width:66px;height:19px;overflow:hidden"><div class="t" style="left:0;top:0;font-size:14.4px;line-height:20px;color:#000;transform-origin:0 15px;transform:scale(1.010,1.09)">Large</div></div>
<div class="r" style="left:507.0px;top:835px;width:66px;height:19px;overflow:hidden"><div class="t" style="left:0;top:0;font-size:14.4px;line-height:20px;color:#000;transform-origin:0 15px;transform:scale(0.963,1.09)">24P</div></div>
<div class="t" style="left:598.0px;top:835px;font-size:14.4px;line-height:20px;color:#000;transform-origin:0 15px;transform:scaleY(1.09)">18602</div>
<div class="t" style="left:657.9px;top:835px;font-size:14.4px;line-height:20px;color:#000;transform-origin:0 15px;transform:scaleY(1.09)">426956</div>
<div class="t" style="left:78.0px;top:855px;font-size:14.4px;line-height:20px;color:#000;transform-origin:0 15px;transform:scaleY(1.09)">27</div>
<div class="t" style="left:146.0px;top:855px;font-size:14.4px;line-height:20px;color:#000;transform-origin:0 15px;transform:scaleY(1.09)">27</div>
<div class="t" style="left:214.0px;top:855px;font-size:14.4px;line-height:20px;color:#000;transform-origin:0 15px;transform:scaleY(1.09)">27</div>
<div class="t" style="left:282.0px;top:855px;font-size:14.4px;line-height:20px;color:#000;transform-origin:0 15px;transform:scaleY(1.09)">27</div>
<div class="r" style="left:303.0px;top:855px;width:66px;height:19px;overflow:hidden"><div class="t" style="left:0;top:0;font-size:14.4px;line-height:20px;color:#000;transform-origin:0 15px;transform:scale(0.900,1.09)">RAND</div></div>
<div class="r" style="left:371.0px;top:855px;width:66px;height:19px;overflow:hidden"><div class="t" style="left:0;top:0;font-size:14.4px;line-height:20px;color:#000;transform-origin:0 15px;transform:scale(0.900,1.09)">ALPHA</div></div>
<div class="r" style="left:439.0px;top:855px;width:66px;height:19px;overflow:hidden"><div class="t" style="left:0;top:0;font-size:14.4px;line-height:20px;color:#000;transform-origin:0 15px;transform:scale(1.010,1.09)">Large</div></div>
<div class="r" style="left:507.0px;top:855px;width:66px;height:19px;overflow:hidden"><div class="t" style="left:0;top:0;font-size:14.4px;line-height:20px;color:#000;transform-origin:0 15px;transform:scale(0.963,1.09)">24P</div></div>
<div class="t" style="left:614.0px;top:855px;font-size:14.4px;line-height:20px;color:#000;transform-origin:0 15px;transform:scaleY(1.09)">536</div>
<div class="t" style="left:657.9px;top:855px;font-size:14.4px;line-height:20px;color:#000;transform-origin:0 15px;transform:scaleY(1.09)">272916</div>
<div class="t" style="left:78.0px;top:875px;font-size:14.4px;line-height:20px;color:#000;transform-origin:0 15px;transform:scaleY(1.09)">28</div>
<div class="t" style="left:146.0px;top:875px;font-size:14.4px;line-height:20px;color:#000;transform-origin:0 15px;transform:scaleY(1.09)">28</div>
<div class="t" style="left:214.0px;top:875px;font-size:14.4px;line-height:20px;color:#000;transform-origin:0 15px;transform:scaleY(1.09)">28</div>
<div class="t" style="left:282.0px;top:875px;font-size:14.4px;line-height:20px;color:#000;transform-origin:0 15px;transform:scaleY(1.09)">28</div>
<div class="r" style="left:303.0px;top:875px;width:66px;height:19px;overflow:hidden"><div class="t" style="left:0;top:0;font-size:14.4px;line-height:20px;color:#000;transform-origin:0 15px;transform:scale(0.900,1.09)">LRUV</div></div>
<div class="r" style="left:371.0px;top:875px;width:66px;height:19px;overflow:hidden"><div class="t" style="left:0;top:0;font-size:14.4px;line-height:20px;color:#000;transform-origin:0 15px;transform:scale(0.900,1.09)">GROUP</div></div>
<div class="r" style="left:439.0px;top:875px;width:66px;height:19px;overflow:hidden"><div class="t" style="left:0;top:0;font-size:14.4px;line-height:20px;color:#000;transform-origin:0 15px;transform:scale(1.003,1.09)">Small</div></div>
<div class="r" style="left:507.0px;top:875px;width:66px;height:19px;overflow:hidden"><div class="t" style="left:0;top:0;font-size:14.4px;line-height:20px;color:#000;transform-origin:0 15px;transform:scale(0.963,1.09)">20P</div></div>
<div class="t" style="left:606.0px;top:875px;font-size:14.4px;line-height:20px;color:#000;transform-origin:0 15px;transform:scaleY(1.09)">5689</div>
<div class="t" style="left:657.9px;top:875px;font-size:14.4px;line-height:20px;color:#000;transform-origin:0 15px;transform:scaleY(1.09)">375504</div>
<div class="t" style="left:78.0px;top:895px;font-size:14.4px;line-height:20px;color:#000;transform-origin:0 15px;transform:scaleY(1.09)">29</div>
<div class="t" style="left:146.0px;top:895px;font-size:14.4px;line-height:20px;color:#000;transform-origin:0 15px;transform:scaleY(1.09)">29</div>
<div class="t" style="left:214.0px;top:895px;font-size:14.4px;line-height:20px;color:#000;transform-origin:0 15px;transform:scaleY(1.09)">29</div>
<div class="t" style="left:282.0px;top:895px;font-size:14.4px;line-height:20px;color:#000;transform-origin:0 15px;transform:scaleY(1.09)">29</div>
<div class="r" style="left:303.0px;top:895px;width:66px;height:19px;overflow:hidden"><div class="t" style="left:0;top:0;font-size:14.4px;line-height:20px;color:#000;transform-origin:0 15px;transform:scale(0.900,1.09)">FIFO</div></div>
<div class="r" style="left:371.0px;top:895px;width:66px;height:19px;overflow:hidden"><div class="t" style="left:0;top:0;font-size:14.4px;line-height:20px;color:#000;transform-origin:0 15px;transform:scale(0.900,1.09)">GROUP</div></div>
<div class="r" style="left:439.0px;top:895px;width:66px;height:19px;overflow:hidden"><div class="t" style="left:0;top:0;font-size:14.4px;line-height:20px;color:#000;transform-origin:0 15px;transform:scale(1.003,1.09)">Small</div></div>
<div class="r" style="left:507.0px;top:895px;width:66px;height:19px;overflow:hidden"><div class="t" style="left:0;top:0;font-size:14.4px;line-height:20px;color:#000;transform-origin:0 15px;transform:scale(0.963,1.09)">20P</div></div>
<div class="t" style="left:606.0px;top:895px;font-size:14.4px;line-height:20px;color:#000;transform-origin:0 15px;transform:scaleY(1.09)">1633</div>
<div class="t" style="left:657.9px;top:895px;font-size:14.4px;line-height:20px;color:#000;transform-origin:0 15px;transform:scaleY(1.09)">321299</div>
<div class="t" style="left:78.0px;top:915px;font-size:14.4px;line-height:20px;color:#000;transform-origin:0 15px;transform:scaleY(1.09)">30</div>
<div class="t" style="left:146.0px;top:915px;font-size:14.4px;line-height:20px;color:#000;transform-origin:0 15px;transform:scaleY(1.09)">30</div>
<div class="t" style="left:214.0px;top:915px;font-size:14.4px;line-height:20px;color:#000;transform-origin:0 15px;transform:scaleY(1.09)">30</div>
<div class="t" style="left:282.0px;top:915px;font-size:14.4px;line-height:20px;color:#000;transform-origin:0 15px;transform:scaleY(1.09)">30</div>
<div class="r" style="left:303.0px;top:915px;width:66px;height:19px;overflow:hidden"><div class="t" style="left:0;top:0;font-size:14.4px;line-height:20px;color:#000;transform-origin:0 15px;transform:scale(0.900,1.09)">RAND</div></div>
<div class="r" style="left:371.0px;top:915px;width:66px;height:19px;overflow:hidden"><div class="t" style="left:0;top:0;font-size:14.4px;line-height:20px;color:#000;transform-origin:0 15px;transform:scale(0.900,1.09)">GROUP</div></div>
<div class="r" style="left:439.0px;top:915px;width:66px;height:19px;overflow:hidden"><div class="t" style="left:0;top:0;font-size:14.4px;line-height:20px;color:#000;transform-origin:0 15px;transform:scale(1.003,1.09)">Small</div></div>
<div class="r" style="left:507.0px;top:915px;width:66px;height:19px;overflow:hidden"><div class="t" style="left:0;top:0;font-size:14.4px;line-height:20px;color:#000;transform-origin:0 15px;transform:scale(0.963,1.09)">20P</div></div>
<div class="t" style="left:614.0px;top:915px;font-size:14.4px;line-height:20px;color:#000;transform-origin:0 15px;transform:scaleY(1.09)">121</div>
<div class="t" style="left:657.9px;top:915px;font-size:14.4px;line-height:20px;color:#000;transform-origin:0 15px;transform:scaleY(1.09)">208279</div>
<div class="t" style="left:78.0px;top:935px;font-size:14.4px;line-height:20px;color:#000;transform-origin:0 15px;transform:scaleY(1.09)">31</div>
<div class="t" style="left:146.0px;top:935px;font-size:14.4px;line-height:20px;color:#000;transform-origin:0 15px;transform:scaleY(1.09)">31</div>
<div class="t" style="left:214.0px;top:935px;font-size:14.4px;line-height:20px;color:#000;transform-origin:0 15px;transform:scaleY(1.09)">31</div>
<div class="t" style="left:282.0px;top:935px;font-size:14.4px;line-height:20px;color:#000;transform-origin:0 15px;transform:scaleY(1.09)">31</div>
<div class="r" style="left:303.0px;top:935px;width:66px;height:19px;overflow:hidden"><div class="t" style="left:0;top:0;font-size:14.4px;line-height:20px;color:#000;transform-origin:0 15px;transform:scale(0.900,1.09)">LRUV</div></div>
<div class="r" style="left:371.0px;top:935px;width:66px;height:19px;overflow:hidden"><div class="t" style="left:0;top:0;font-size:14.4px;line-height:20px;color:#000;transform-origin:0 15px;transform:scale(0.900,1.09)">FREQY</div></div>
<div class="r" style="left:439.0px;top:935px;width:66px;height:19px;overflow:hidden"><div class="t" style="left:0;top:0;font-size:14.4px;line-height:20px;color:#000;transform-origin:0 15px;transform:scale(1.003,1.09)">Small</div></div>
<div class="r" style="left:507.0px;top:935px;width:66px;height:19px;overflow:hidden"><div class="t" style="left:0;top:0;font-size:14.4px;line-height:20px;color:#000;transform-origin:0 15px;transform:scale(0.963,1.09)">20P</div></div>
<div class="t" style="left:614.0px;top:935px;font-size:14.4px;line-height:20px;color:#000;transform-origin:0 15px;transform:scaleY(1.09)">980</div>
<div class="t" style="left:657.9px;top:935px;font-size:14.4px;line-height:20px;color:#000;transform-origin:0 15px;transform:scaleY(1.09)">299123</div>
<div class="r" style="left:29px;top:315px;width:679px;height:459px;border:1px solid #fff"></div>
<div class="r" style="left:27px;top:313px;width:683px;height:2px;background:#107c41"></div>
<div class="r" style="left:27px;top:774px;width:678px;height:2px;background:#107c41"></div>
<div class="r" style="left:27px;top:313px;width:2px;height:463px;background:#107c41"></div>
<div class="r" style="left:708px;top:313px;width:2px;height:458px;background:#107c41"></div>
<div class="r" style="left:705px;top:771px;width:7px;height:7px;background:#107c41;border:1px solid #fff"></div>
<div class="r" style="left:1894px;top:294px;width:3px;height:659px;background:#f0e6e9"></div>
<div class="r" style="left:1897px;top:294px;width:21px;height:662px;background:#f3f3f3;border-radius:10px"></div>
<svg class="i" style="left:1901px;top:299px;" width="13" height="11" viewBox="0 0 13 11"><path d="M6.5 2.2 L11 8.8 H2 Z" fill="#707070" stroke="#707070" stroke-width="1.5" stroke-linejoin="round"/></svg>
<div class="r" style="left:1902px;top:315px;width:11px;height:233px;background:#707070;border-radius:6px"></div>
<svg class="i" style="left:1901px;top:940px;" width="13" height="11" viewBox="0 0 13 11"><path d="M6.5 9 L11 2.2 H2 Z" fill="#707070" stroke="#707070" stroke-width="1.5" stroke-linejoin="round"/></svg>
<div class="r" style="left:0px;top:953px;width:1919px;height:40px;background:linear-gradient(90deg,#e9e4e5 0%,#eae5e6 25%,#efe6e9 45%,#efe6e9 100%)"></div>
<div class="r" style="left:0px;top:953px;width:430px;height:12px;background:#fff"></div>
<div class="r" style="left:0px;top:953px;width:141px;height:40px;background:#e9e4e5;border-top-right-radius:8px"></div>
<div class="r" style="left:418px;top:953px;width:300px;height:40px;background:linear-gradient(90deg,#e9e4e5 0%,#eae5e6 12%,#ece5e7 60%,#eee6e8 100%);border-top-left-radius:8px"></div>
<div class="r" style="left:0px;top:953px;width:1894px;height:1px;background:#dedede"></div>
<svg class="i" style="left:30px;top:965px;" width="11" height="14" viewBox="0 0 11 14"><path d="M8.5 1.5 L2.5 7 L8.5 12.5" fill="none" stroke="#8f8f8f" stroke-width="1.3"/></svg>
<svg class="i" style="left:71px;top:965px;" width="11" height="14" viewBox="0 0 11 14"><path d="M2.5 1.5 L8.5 7 L2.5 12.5" fill="none" stroke="#8f8f8f" stroke-width="1.3"/></svg>
<div class="r" style="left:141px;top:953px;width:277px;height:35px;background:#fff;border-radius:0 0 7px 7px"></div>
<div class="t" style="left:151.6px;top:961.63px;font-size:16.50px;line-height:16.50px;color:#1f1f1f;transform:scaleX(1.0317);-webkit-text-stroke:0.4px #1f1f1f;">Example_FullFactorial_Design_wi</div>
<div class="r" style="left:151.6px;top:983px;width:256.5px;height:2px;background:#107c41"></div>
<div class="r" style="left:423.5px;top:961px;width:1px;height:24px;background:#c8c3c4"></div>
<svg class="i" style="left:475px;top:963px;" width="16" height="16" viewBox="0 0 16 16"><path d="M8 1 V15 M1 8 H15" stroke="#262626" stroke-width="1.4"/></svg>
<div class="r" style="left:1154.5px;top:967.5px;width:3px;height:3px;background:#262626"></div>
<div class="r" style="left:1154.5px;top:972.5px;width:3px;height:3px;background:#262626"></div>
<div class="r" style="left:1154.5px;top:977.5px;width:3px;height:3px;background:#262626"></div>
<div class="r" style="left:1176px;top:962px;width:721px;height:21px;background:#f3f3f3;border-radius:11px"></div>
<svg class="i" style="left:1181px;top:966px;" width="11" height="13" viewBox="0 0 11 13"><path d="M1.5 6.5 L9.5 1 V12 Z" fill="#707070" stroke="#707070" stroke-width="1.5" stroke-linejoin="round"/></svg>
<div class="r" style="left:1197px;top:967px;width:664px;height:11px;background:#707070;border-radius:6px"></div>
<svg class="i" style="left:1881px;top:966px;" width="11" height="13" viewBox="0 0 11 13"><path d="M9.5 6.5 L1.5 1 V12 Z" fill="#707070" stroke="#707070" stroke-width="1.5" stroke-linejoin="round"/></svg>
<div class="r" style="left:0px;top:993px;width:1919px;height:25px;background:#f3f3f3;border-top:1px solid #c9c5c6"></div>
<div class="t" style="left:15.3px;top:1002.42px;font-size:12.50px;line-height:12.50px;color:#3b3b3b;transform:scaleX(0.9825);">Ready</div>
<svg class="i" style="left:74px;top:997px;" width="21" height="21" viewBox="0 0 21 21"><circle cx="8.6" cy="4" r="2.3" fill="none" stroke="#262626" stroke-width="1.2"/><path d="M6.6 6.6 C4.8 5.6 2.2 4.6 1.6 6.2 C1.1 7.6 3.5 8.5 5.3 9.1 C6.3 9.5 6.6 10.3 6.4 11.3 L5.6 15.8 C5.3 18.3 7.6 18.8 8.1 16.9 L8.9 13.6 L10.8 17.3 C11.2 18 11.8 18.3 12.3 18.2" fill="none" stroke="#262626" stroke-width="1.2" stroke-linejoin="round"/><path d="M10.8 6.6 C12.6 5.6 15 4.7 15.6 6.1 C16 7.2 14.6 7.9 13.2 8.4 L11.3 9.7" fill="none" stroke="#262626" stroke-width="1.2" stroke-linejoin="round"/><path d="M13 12.2 C13.2 10.3 17.8 10.2 17.9 12.7 C18 14.5 15.6 14.8 15.4 17" fill="none" stroke="#262626" stroke-width="1.2"/><circle cx="15.4" cy="18.6" r="0.7" fill="#262626"/></svg>
<div class="t" style="left:96.0px;top:1002.42px;font-size:12.50px;line-height:12.50px;color:#3b3b3b;transform:scaleX(1.0147);">Accessibility: Unavailable</div>
<div class="t" style="left:1214.0px;top:1002.02px;font-size:12.50px;line-height:12.50px;color:#3b3b3b;transform:scaleX(1.0116);">Average: 44551.2197</div>
<div class="t" style="left:1362.3px;top:1002.02px;font-size:12.50px;line-height:12.50px;color:#3b3b3b;transform:scaleX(1.0023);">Count: 230</div>
<div class="t" style="left:1444.0px;top:1002.02px;font-size:12.50px;line-height:12.50px;color:#3b3b3b;transform:scaleX(0.9863);">Sum: 5880761</div>
<div class="r" style="left:1548px;top:994px;width:50px;height:24px;background:#dedede"></div>
<svg class="i" style="left:1563px;top:997px;" width="19" height="19" viewBox="0 0 19 19"><rect x="1.3" y="1.3" width="16.4" height="16.4" fill="none" stroke="#404040" stroke-width="1.5"/><path d="M6.8 1 V18 M12.2 1 V18 M1 6.8 H18 M1 12.2 H18" stroke="#404040" stroke-width="1.5"/></svg>
<svg class="i" style="left:1613px;top:997px;" width="20" height="19" viewBox="0 0 20 19"><rect x="1.3" y="1.3" width="17" height="16.4" fill="none" stroke="#404040" stroke-width="1.4"/><rect x="4.8" y="4.3" width="10" height="10.4" fill="none" stroke="#404040" stroke-width="1.2"/><path d="M7 7 H12.5 M7 9.5 H12.5 M7 12 H12.5" stroke="#404040" stroke-width="1"/></svg>
<svg class="i" style="left:1663px;top:997px;" width="20" height="19" viewBox="0 0 20 19"><rect x="1.3" y="1.3" width="17" height="16.4" fill="none" stroke="#404040" stroke-width="1.4"/><path d="M6.5 1.3 V9 H12.5 V1.3" fill="none" stroke="#404040" stroke-width="1.3"/></svg>
<div class="r" style="left:1705px;top:1006px;width:10px;height:1.3px;background:#404040"></div>
<div class="r" style="left:1720.5px;top:1007px;width:125.5px;height:1px;background:#6e6e6e"></div>
<div class="r" style="left:1771px;top:1000px;width:6px;height:14px;background:#5e5e5e;border-radius:1px"></div>
<div class="r" style="left:1783px;top:1003px;width:1px;height:8px;background:#6e6e6e"></div>
<svg class="i" style="left:1851px;top:1001px;" width="12" height="12" viewBox="0 0 12 12"><path d="M6 0.5 V11.5 M0.5 6 H11.5" stroke="#404040" stroke-width="1.3"/></svg>
<div class="t" style="left:1878.4px;top:1002.42px;font-size:12.50px;line-height:12.50px;color:#3b3b3b;transform:scaleX(0.9553);">85%</div></body></html>
